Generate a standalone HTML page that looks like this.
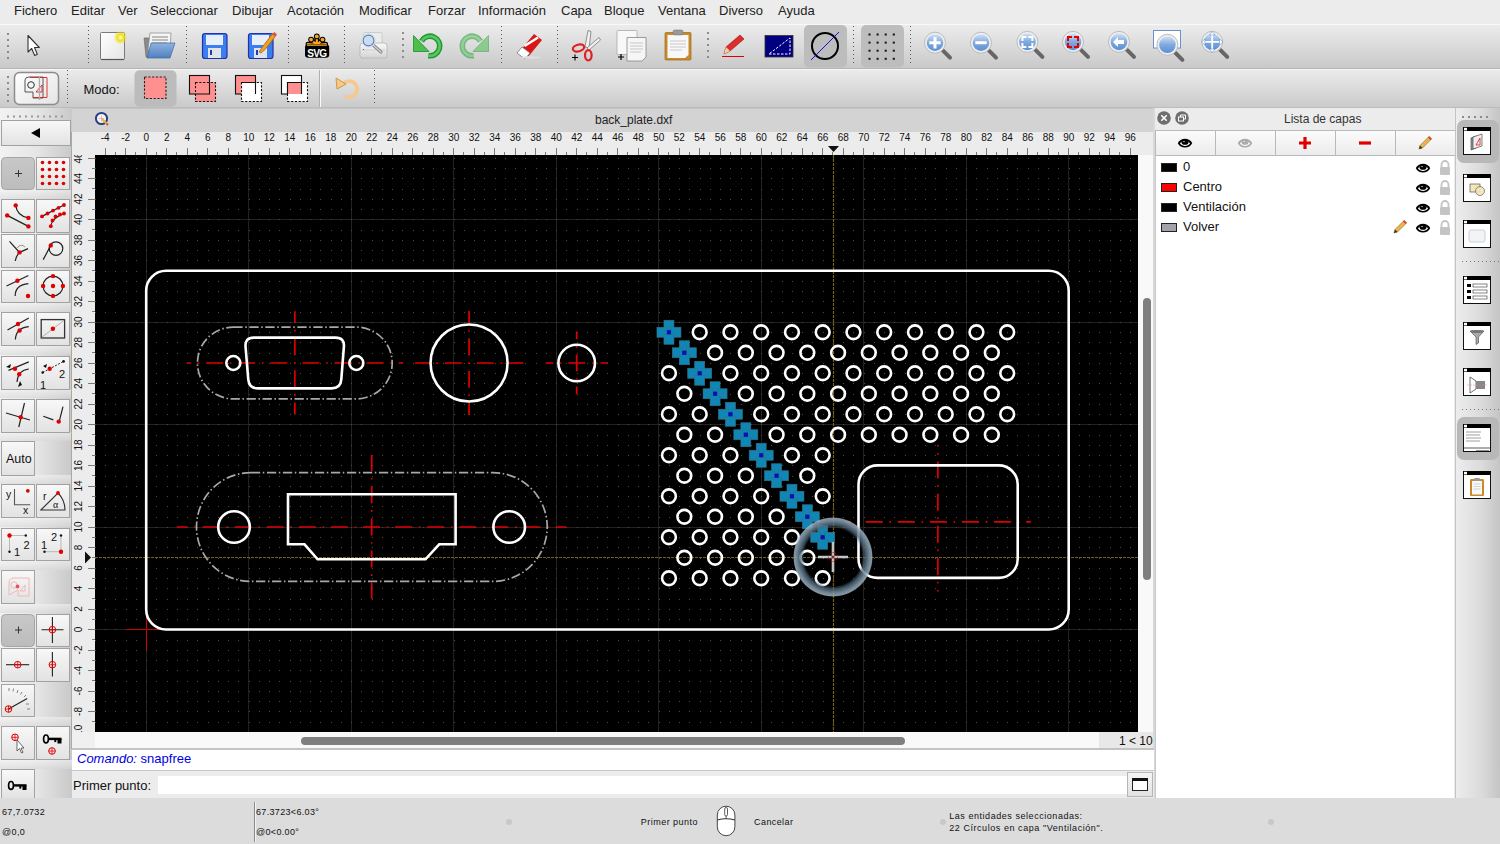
<!DOCTYPE html>
<html><head><meta charset="utf-8">
<style>
html,body{margin:0;padding:0;width:1500px;height:844px;overflow:hidden;background:#ececec;font-family:"Liberation Sans",sans-serif;color:#000}
.abs{position:absolute}
.t{position:absolute;white-space:nowrap;line-height:1}
#menubar{left:0;top:0;width:1500px;height:24px;background:#ececec}
#menubar span{position:absolute;top:3px;font-size:13px;color:#222}
#tb1{left:0;top:24px;width:1500px;height:44px;background:linear-gradient(#ececec,#c9c9c9);border-top:1px solid #f8f8f8;box-sizing:border-box}
#tb2{left:0;top:68px;width:1500px;height:40px;background:linear-gradient(#f6f6f6 0,#f6f6f6 1px,#ebebeb 1px,#cacaca 38px,#bcbcbc 38px);border-top:1px solid #b5b5b5;box-sizing:border-box}
#lefttb{left:0;top:108px;width:72px;height:690px;background:linear-gradient(90deg,#f2f2f2,#e6e6e6 50%,#c9c9c9)}
.btn{position:absolute;box-sizing:border-box;border:1px solid #9c9c9c;background:linear-gradient(#f7f7f7,#e4e4e4)}
.grip{position:absolute;width:2px;background:repeating-linear-gradient(#8a8a8a 0 2px,transparent 2px 6px)}
.griph{position:absolute;height:2px;background:repeating-linear-gradient(90deg,#8a8a8a 0 2px,transparent 2px 6px)}
#status{left:0;top:798px;width:1500px;height:46px;background:#dcdcdc}
#status .t{font-size:10px;color:#111}
</style></head><body>
<div id="menubar" class="abs"><span style="left:14px">Fichero</span><span style="left:71px">Editar</span><span style="left:118px">Ver</span><span style="left:150px">Seleccionar</span><span style="left:232px">Dibujar</span><span style="left:287px">Acotación</span><span style="left:359px">Modificar</span><span style="left:428px">Forzar</span><span style="left:478px">Información</span><span style="left:561px">Capa</span><span style="left:604px">Bloque</span><span style="left:658px">Ventana</span><span style="left:719px">Diverso</span><span style="left:778px">Ayuda</span>
</div>
<div id="tb1" class="abs"></div>

<div id="tb2" class="abs"></div>
<svg class="abs" style="left:0;top:0" width="1500" height="110" viewBox="0 0 1500 110">
<defs>
<linearGradient id="lens" x1="0" y1="0" x2="0" y2="1"><stop offset="0" stop-color="#cfe0f5"/><stop offset="0.5" stop-color="#7fa9e0"/><stop offset="1" stop-color="#5b8fd6"/></linearGradient>
<linearGradient id="fold" x1="0" y1="0" x2="0" y2="1"><stop offset="0" stop-color="#8fb4e0"/><stop offset="1" stop-color="#4f7fc0"/></linearGradient>
<linearGradient id="green" x1="0" y1="0" x2="1" y2="1"><stop offset="0" stop-color="#7fd07a"/><stop offset="1" stop-color="#1f9a3a"/></linearGradient>
<linearGradient id="page" x1="0" y1="0" x2="1" y2="1"><stop offset="0" stop-color="#ffffff"/><stop offset="1" stop-color="#e4e4e4"/></linearGradient>
<radialGradient id="glow"><stop offset="0" stop-color="#ffffc0"/><stop offset="0.45" stop-color="#f0e020"/><stop offset="1" stop-color="#f0e020" stop-opacity="0"/></radialGradient>
</defs>
<rect x="7" y="33" width="2" height="2" fill="#8c8c8c"/><rect x="7" y="39" width="2" height="2" fill="#8c8c8c"/><rect x="7" y="45" width="2" height="2" fill="#8c8c8c"/><rect x="7" y="51" width="2" height="2" fill="#8c8c8c"/><rect x="7" y="57" width="2" height="2" fill="#8c8c8c"/>
<path d="M88.5 26V66" stroke="#555" stroke-width="1" stroke-dasharray="1 3"/>
<path d="M186.5 26V66" stroke="#555" stroke-width="1" stroke-dasharray="1 3"/>
<path d="M288.5 26V66" stroke="#555" stroke-width="1" stroke-dasharray="1 3"/>
<path d="M344.5 26V66" stroke="#555" stroke-width="1" stroke-dasharray="1 3"/>
<rect x="402" y="32" width="2" height="2" fill="#8c8c8c"/><rect x="402" y="38" width="2" height="2" fill="#8c8c8c"/><rect x="402" y="44" width="2" height="2" fill="#8c8c8c"/><rect x="402" y="50" width="2" height="2" fill="#8c8c8c"/><rect x="402" y="56" width="2" height="2" fill="#8c8c8c"/>
<path d="M501.5 26V66" stroke="#555" stroke-width="1" stroke-dasharray="1 3"/>
<path d="M557.5 26V66" stroke="#555" stroke-width="1" stroke-dasharray="1 3"/>
<rect x="707" y="32" width="2" height="2" fill="#8c8c8c"/><rect x="707" y="38" width="2" height="2" fill="#8c8c8c"/><rect x="707" y="44" width="2" height="2" fill="#8c8c8c"/><rect x="707" y="50" width="2" height="2" fill="#8c8c8c"/><rect x="707" y="56" width="2" height="2" fill="#8c8c8c"/>
<path d="M853.5 26V66" stroke="#555" stroke-width="1" stroke-dasharray="1 3"/>
<path d="M910.5 26V66" stroke="#555" stroke-width="1" stroke-dasharray="1 3"/>
<path d="M28 35.5V52L31.7 48.5L34.7 55.5L37.3 54.3L34.5 47.5H39.3Z" fill="#fff" stroke="#333" stroke-width="1.1" stroke-linejoin="round"/>
<rect x="100.5" y="32.5" width="24" height="27" rx="1" fill="url(#page)" stroke="#7a7a7a" stroke-width="1"/><path d="M101 59.5H124" stroke="#555" stroke-width="1.2"/>
<circle cx="120.5" cy="37.5" r="7" fill="url(#glow)"/>
<path d="M144 38H151L153 36H160V57H146Z" fill="#8a8a8a" stroke="#666" stroke-width="0.6"/>
<path d="M150 33H171L170 50H148Z" fill="#f4f4f4" stroke="#888" stroke-width="0.7"/><path d="M152 37H168M152 40H168M152 43H167" stroke="#aaa" stroke-width="1.4"/>
<path d="M151 43H175L170 58H147Z" fill="url(#fold)" stroke="#41689c" stroke-width="0.7"/>
<rect x="202.5" y="33.5" width="24.5" height="25" rx="2.5" fill="#3b7ef0" stroke="#2430a8" stroke-width="1.2"/><rect x="206" y="35" width="17" height="10" fill="#e8eefa"/><rect x="208" y="48" width="13" height="10" fill="#dfe3ea"/><rect x="210" y="50" width="2" height="5" fill="#1d3fb0"/>
<rect x="248.5" y="33.5" width="24.5" height="25" rx="2.5" fill="#3b7ef0" stroke="#2430a8" stroke-width="1.2"/><rect x="252" y="35" width="17" height="10" fill="#e8eefa"/><rect x="254" y="48" width="13" height="10" fill="#dfe3ea"/><rect x="256" y="50" width="2" height="5" fill="#1d3fb0"/>
<path d="M259 52L263 46L273 33L276 35.5L266 48.5L261 53Z" fill="#f0a020" stroke="#a05a10" stroke-width="0.7"/><path d="M272 34.5L274.5 32L277 34.5L275 36.5Z" fill="#e05050"/>
<path d="M316.8 45L311.1 39.6M316.8 45L316.8 36.4M316.8 45L322.5 39.6M316.8 45L307.8 44M316.8 45L325.8 44" stroke="#000" stroke-width="4.6" stroke-linecap="round"/>
<path d="M316.8 45L311.1 39.6M316.8 45L316.8 36.4M316.8 45L322.5 39.6M316.8 45L307.8 44M316.8 45L325.8 44" stroke="#f6a82a" stroke-width="2.2" stroke-linecap="round"/>
<circle cx="311.1" cy="39.6" r="2.9" fill="#000"/><circle cx="316.8" cy="36.4" r="2.9" fill="#000"/><circle cx="322.5" cy="39.6" r="2.9" fill="#000"/><circle cx="311.1" cy="39.6" r="1.9" fill="#f6a82a"/><circle cx="316.8" cy="36.4" r="1.9" fill="#f6a82a"/><circle cx="322.5" cy="39.6" r="1.9" fill="#f6a82a"/>
<rect x="305" y="44.3" width="24.2" height="13.5" rx="3.2" fill="#000"/><path d="M307 45.2H327" stroke="#f6a82a" stroke-width="1.2"/>
<text x="316.9" y="56.6" text-anchor="middle" font-family="Liberation Sans" font-weight="bold" font-size="11" fill="#fff" letter-spacing="-0.8" transform="translate(316.9 0) scale(0.92 1) translate(-316.9 0)">SVG</text>
<rect x="363.5" y="32.5" width="18.5" height="14" rx="1" fill="#ececec" stroke="#c4c4c4" stroke-width="0.8"/>
<defs><linearGradient id="prn" x1="0" y1="0" x2="0" y2="1"><stop offset="0" stop-color="#fafafa"/><stop offset="1" stop-color="#d4d4d4"/></linearGradient></defs>
<path d="M360 46Q360 43 363 43H384Q387 43 387 46V56Q387 58 385 58H362Q360 58 360 56Z" fill="url(#prn)" stroke="#b4b4b4" stroke-width="0.8"/><path d="M362 50H385" stroke="#c8c8c8" stroke-width="0.8"/><circle cx="363.5" cy="49.5" r="0.6" fill="#555"/>
<path d="M372.5 44.5L381 52" stroke="#8a8a8a" stroke-width="3.2" stroke-linecap="round"/><path d="M372.5 44.5L381 52" stroke="#d0d0d0" stroke-width="1.2" stroke-linecap="round"/>
<circle cx="368.5" cy="40.5" r="6.8" fill="#f2f2f2" stroke="#cfcfcf" stroke-width="0.6"/><circle cx="368.5" cy="40.5" r="5.4" fill="#cfdcee" stroke="#4a84d0" stroke-width="1.1"/>
<path d="M421.5 41.1A9.8 9.8 0 1 1 428.3 55.65" fill="none" stroke="#1f9a3a" stroke-width="5.6"/><path d="M421.5 41.1A9.8 9.8 0 1 1 428.3 55.65" fill="none" stroke="#5cc65a" stroke-width="2.5"/><path d="M413.5 35.5V51.5H429Z" fill="#4cbf4c" stroke="#1c8a30" stroke-width="0.8" stroke-linejoin="round"/>
<g transform="translate(902 0) scale(-1 1)" opacity="0.55"><path d="M421.5 41.1A9.8 9.8 0 1 1 428.3 55.65" fill="none" stroke="#1f9a3a" stroke-width="5.6"/><path d="M421.5 41.1A9.8 9.8 0 1 1 428.3 55.65" fill="none" stroke="#5cc65a" stroke-width="2.5"/><path d="M413.5 35.5V51.5H429Z" fill="#4cbf4c" stroke="#1c8a30" stroke-width="0.8" stroke-linejoin="round"/></g>
<path d="M520 51L534 34L542 40L528 57Z" fill="#d81818"/><path d="M524.5 46L538 37.5" stroke="#fff" stroke-width="2.5"/><path d="M517 53L522 47L530 53L525 59Z" fill="#fff" stroke="#777" stroke-width="0.8"/><ellipse cx="531" cy="57.5" rx="10" ry="1.5" fill="#ddd"/>
<path d="M585 47L588 30.5L591 31.5L589 48Z" fill="#f2f2f2" stroke="#777" stroke-width="0.8"/><path d="M587 48L599 37.5L600.5 40L589 50Z" fill="#f2f2f2" stroke="#777" stroke-width="0.8"/>
<ellipse cx="578.5" cy="48" rx="5.8" ry="3.3" transform="rotate(-15 578.5 48)" fill="none" stroke="#e02020" stroke-width="2.2"/><ellipse cx="588.3" cy="55.3" rx="3.3" ry="5.2" fill="none" stroke="#e02020" stroke-width="2.2"/>
<path d="M572 57.5H578M575 54.5V60.5" stroke="#000" stroke-width="1.1"/>
<rect x="617" y="30.5" width="20" height="24" rx="1" fill="#f8f8f8" stroke="#aaa" stroke-width="0.8"/><path d="M627 37.5H646V57L642 61H627Z" fill="#f6f6f6" stroke="#888" stroke-width="0.8"/><path d="M630 43H643M630 46H643M630 49H643M630 52H641" stroke="#bbb" stroke-width="0.8"/>
<path d="M618 57H624M621 54V60" stroke="#000" stroke-width="1.2"/>
<rect x="665" y="32.5" width="26" height="27.5" rx="1" fill="#c98a2a" stroke="#9a6a20" stroke-width="0.7"/><path d="M667.5 35H688.5V55L685 58H667.5Z" fill="#f8f8f8"/><rect x="673" y="30" width="10" height="5" rx="1.5" fill="#999" stroke="#777" stroke-width="0.5"/><path d="M670 41H686M670 44H686M670 47H686M670 50H682" stroke="#bbb" stroke-width="0.8"/>
<path d="M724 54L726 47L740 35L744 39L730 51Z" fill="#e02c2c" stroke="#8a1a1a" stroke-width="0.6"/><path d="M724 54L726 47L730 51Z" fill="#f0d0a0"/><path d="M722 56.5H744" stroke="#e00000" stroke-width="1"/>
<rect x="765" y="35.5" width="28" height="21.5" fill="#000080" stroke="#333" stroke-width="0.8"/><path d="M769 54H790V38Z" fill="none" stroke="#fff" stroke-width="1" stroke-dasharray="2.5 1.5"/>
<rect x="804" y="25" width="43" height="42.5" rx="5" fill="#bdbdbd"/>
<rect x="861" y="25" width="43" height="42.5" rx="5" fill="#bdbdbd"/>
<circle cx="825" cy="46" r="13" fill="none" stroke="#000" stroke-width="2"/><path d="M811 60L839 32" stroke="#1010e0" stroke-width="1"/>
<rect x="868.5" y="33.5" width="2" height="2" fill="#111"/><rect x="876.6" y="33.5" width="2" height="2" fill="#111"/><rect x="884.7" y="33.5" width="2" height="2" fill="#111"/><rect x="892.8" y="33.5" width="2" height="2" fill="#111"/><rect x="868.5" y="41.6" width="2" height="2" fill="#111"/><rect x="876.6" y="41.6" width="2" height="2" fill="#111"/><rect x="884.7" y="41.6" width="2" height="2" fill="#111"/><rect x="892.8" y="41.6" width="2" height="2" fill="#111"/><rect x="868.5" y="49.7" width="2" height="2" fill="#111"/><rect x="876.6" y="49.7" width="2" height="2" fill="#111"/><rect x="884.7" y="49.7" width="2" height="2" fill="#111"/><rect x="892.8" y="49.7" width="2" height="2" fill="#111"/><rect x="868.5" y="57.8" width="2" height="2" fill="#111"/><rect x="876.6" y="57.8" width="2" height="2" fill="#111"/><rect x="884.7" y="57.8" width="2" height="2" fill="#111"/><rect x="892.8" y="57.8" width="2" height="2" fill="#111"/>
<path d="M943 50.7L950 57.7" stroke="#666" stroke-width="4" stroke-linecap="round"/><circle cx="935" cy="42.7" r="10.5" fill="#eee" stroke="#bbb" stroke-width="1"/><circle cx="935" cy="42.7" r="8.3" fill="url(#lens)"/><path d="M935 37V48.5M929.3 42.7H940.7" stroke="#fff" stroke-width="3"/>
<path d="M989 50.7L996 57.7" stroke="#666" stroke-width="4" stroke-linecap="round"/><circle cx="981" cy="42.7" r="10.5" fill="#eee" stroke="#bbb" stroke-width="1"/><circle cx="981" cy="42.7" r="8.3" fill="url(#lens)"/><path d="M975.3 42.7H986.7" stroke="#fff" stroke-width="3"/>
<path d="M1035.4 49.9L1042.4 56.9" stroke="#666" stroke-width="4" stroke-linecap="round"/><circle cx="1027.4" cy="41.9" r="10.5" fill="#eee" stroke="#bbb" stroke-width="1"/><circle cx="1027.4" cy="41.9" r="8.3" fill="url(#lens)"/><path d="M1022.4000000000001 40.9v-4h4M1028.4 36.9h4v4M1032.4 42.9v4h-4M1026.4 46.9h-4v-4" fill="none" stroke="#fff" stroke-width="2"/>
<path d="M1081 49.9L1088 56.9" stroke="#666" stroke-width="4" stroke-linecap="round"/><circle cx="1073" cy="41.9" r="10.5" fill="#eee" stroke="#bbb" stroke-width="1"/><circle cx="1073" cy="41.9" r="8.3" fill="url(#lens)"/><path d="M1068 40.9v-4h4M1074 36.9h4v4M1078 42.9v4h-4M1072 46.9h-4v-4" fill="none" stroke="#e00000" stroke-width="2"/>
<path d="M1127 49.9L1134 56.9" stroke="#666" stroke-width="4" stroke-linecap="round"/><circle cx="1119" cy="41.9" r="10.5" fill="#eee" stroke="#bbb" stroke-width="1"/><circle cx="1119" cy="41.9" r="8.3" fill="url(#lens)"/><path d="M1113 41.9L1118 37V40H1124V44H1118V47Z" fill="#fff"/>
<rect x="1153.5" y="30.5" width="27" height="17.5" fill="#fff" stroke="#6a8fd0" stroke-width="1"/>
<path d="M1175.4 52.8L1182.4 59.8" stroke="#666" stroke-width="4" stroke-linecap="round"/><circle cx="1167.4" cy="44.8" r="10.5" fill="#eee" stroke="#bbb" stroke-width="1"/><circle cx="1167.4" cy="44.8" r="8.3" fill="url(#lens)"/>
<path d="M1220.2 49.9L1227.2 56.9" stroke="#666" stroke-width="4" stroke-linecap="round"/><circle cx="1212.2" cy="41.9" r="10.5" fill="#eee" stroke="#bbb" stroke-width="1"/><circle cx="1212.2" cy="41.9" r="8.3" fill="url(#lens)"/><path d="M1212.2 33V51M1203 41.9H1221" stroke="#fff" stroke-width="1.8"/><path d="M1212.2 31.5L1209.5 35H1215ZM1212.2 52.5L1209.5 49H1215ZM1201.5 41.9L1205 39V45ZM1223 41.9L1219.5 39V45Z" fill="#fff" stroke="#5080c0" stroke-width="0.5"/>
<rect x="7" y="76" width="2" height="2" fill="#8c8c8c"/><rect x="7" y="82" width="2" height="2" fill="#8c8c8c"/><rect x="7" y="88" width="2" height="2" fill="#8c8c8c"/><rect x="7" y="94" width="2" height="2" fill="#8c8c8c"/><rect x="7" y="100" width="2" height="2" fill="#8c8c8c"/>
<rect x="14.5" y="72.5" width="44" height="32" rx="5" fill="url(#page)" stroke="#8c8c8c" stroke-width="1.5"/>
<path d="M25 92V80Q25 77 29 77H43V98H33V92Z" fill="none" stroke="#555" stroke-width="1"/><circle cx="31" cy="85" r="3.3" fill="none" stroke="#333" stroke-width="1"/><path d="M30 77.5H47V97.5H33M36 92L42 85V92Z" fill="none" stroke="#e02020" stroke-width="0.9"/><path d="M39.5 76V100" stroke="#aaa" stroke-width="1.3"/>
<path d="M67.5 70V106" stroke="#555" stroke-width="1" stroke-dasharray="1 3"/>
<text x="83.5" y="93.5" font-family="Liberation Sans" font-size="13" fill="#111">Modo:</text>
<rect x="134.5" y="70.3" width="42" height="36.4" rx="5" fill="#bcbcbc"/>
<rect x="144.5" y="77" width="21.5" height="21.5" fill="#ff9090" stroke="#222" stroke-width="1.1" stroke-dasharray="2.2 1.6"/>
<rect x="189.5" y="75.5" width="20" height="18.5" fill="#ff9090" stroke="#111" stroke-width="1.1"/>
<rect x="195.5" y="82.5" width="20" height="19" fill="#ff9090" stroke="#111" stroke-width="1.1" stroke-dasharray="2.2 1.6"/>
<path d="M195.5 94H209.5V82.5" fill="none" stroke="#111" stroke-width="1.1"/>
<rect x="235.5" y="75.5" width="20" height="18.5" fill="#ff9090" stroke="#111" stroke-width="1.1"/>
<rect x="241.5" y="82.5" width="20" height="19" fill="#fff" stroke="#111" stroke-width="1.1" stroke-dasharray="2.2 1.6"/>
<path d="M241.5 82.5H255.5V94" fill="none" stroke="#111" stroke-width="1.1"/>
<rect x="281.5" y="75.5" width="20" height="18.5" fill="#fff" stroke="#111" stroke-width="1.1"/>
<rect x="287.5" y="82.5" width="20" height="19" fill="#fff" stroke="#111" stroke-width="1.1" stroke-dasharray="2.2 1.6"/>
<rect x="287.5" y="82.5" width="14" height="11.5" fill="#ff9090"/><path d="M287.5 94V82.5H301.5V94" fill="none" stroke="#111" stroke-width="1.1"/>
<path d="M319.5 70V107" stroke="#b0b0b0" stroke-width="1"/><path d="M320.5 70V107" stroke="#fafafa" stroke-width="1"/>
<path d="M343 84A8 8 0 1 1 345 96" fill="none" stroke="#f6c88a" stroke-width="3.6"/><path d="M343 84A8 8 0 1 1 345 96" fill="none" stroke="#d89838" stroke-width="0.7" opacity="0"/><path d="M336 78L337 89L346 84Z" fill="#f6c88a" stroke="#c88a2a" stroke-width="0.8"/>
<path d="M374.5 70V106" stroke="#555" stroke-width="1" stroke-dasharray="1 3"/>
</svg>
<div id="lefttb" class="abs"></div>
<svg class="abs" style="left:0;top:108px" width="72" height="690" viewBox="0 108 72 690">
<defs><linearGradient id="bg" x1="0" y1="0" x2="0" y2="1"><stop offset="0" stop-color="#f8f8f8"/><stop offset="1" stop-color="#e2e2e2"/></linearGradient>
<linearGradient id="hl" x1="0" y1="0" x2="0" y2="1"><stop offset="0" stop-color="#c8c8c8"/><stop offset="1" stop-color="#bcbcbc"/></linearGradient>
<linearGradient id="sep" x1="0" y1="0" x2="0" y2="1"><stop offset="0" stop-color="#f4f4f4"/><stop offset="1" stop-color="#d8d8d8"/></linearGradient></defs>
<rect x="7" y="115.5" width="2" height="2" fill="#9a9a9a"/>
<rect x="13" y="115.5" width="2" height="2" fill="#9a9a9a"/>
<rect x="19" y="115.5" width="2" height="2" fill="#9a9a9a"/>
<rect x="25" y="115.5" width="2" height="2" fill="#9a9a9a"/>
<rect x="31" y="115.5" width="2" height="2" fill="#9a9a9a"/>
<rect x="37" y="115.5" width="2" height="2" fill="#9a9a9a"/>
<rect x="43" y="115.5" width="2" height="2" fill="#9a9a9a"/>
<rect x="49" y="115.5" width="2" height="2" fill="#9a9a9a"/>
<rect x="55" y="115.5" width="2" height="2" fill="#9a9a9a"/>
<rect x="61" y="115.5" width="2" height="2" fill="#9a9a9a"/>
<rect x="0" y="190" width="72" height="9" fill="url(#sep)" opacity="0.6"/>
<rect x="0" y="303" width="72" height="9" fill="url(#sep)" opacity="0.6"/>
<rect x="0" y="346" width="72" height="9" fill="url(#sep)" opacity="0.6"/>
<rect x="0" y="389" width="72" height="9" fill="url(#sep)" opacity="0.6"/>
<rect x="0" y="432" width="72" height="9" fill="url(#sep)" opacity="0.6"/>
<rect x="0" y="475" width="72" height="9" fill="url(#sep)" opacity="0.6"/>
<rect x="0" y="518" width="72" height="9" fill="url(#sep)" opacity="0.6"/>
<rect x="0" y="561" width="72" height="9" fill="url(#sep)" opacity="0.6"/>
<rect x="0" y="604" width="72" height="9" fill="url(#sep)" opacity="0.6"/>
<rect x="0" y="717" width="72" height="9" fill="url(#sep)" opacity="0.6"/>
<rect x="0" y="760" width="72" height="9" fill="url(#sep)" opacity="0.6"/>
<rect x="1.5" y="120.5" width="69" height="25" fill="url(#bg)" stroke="#a2a2a2" stroke-width="1"/>
<path d="M31 133L40 128V138Z" fill="#000"/>
<rect x="1.5" y="157.5" width="33" height="32" rx="4" fill="url(#hl)" stroke="#a6a6a6" stroke-width="1"/>
<rect x="36.5" y="157.5" width="33" height="32" fill="url(#bg)" stroke="#a2a2a2" stroke-width="1"/>
<rect x="1.5" y="199.5" width="33" height="33" fill="url(#bg)" stroke="#a2a2a2" stroke-width="1"/>
<rect x="36.5" y="199.5" width="33" height="33" fill="url(#bg)" stroke="#a2a2a2" stroke-width="1"/>
<rect x="1.5" y="234.5" width="33" height="33" fill="url(#bg)" stroke="#a2a2a2" stroke-width="1"/>
<rect x="36.5" y="234.5" width="33" height="33" fill="url(#bg)" stroke="#a2a2a2" stroke-width="1"/>
<rect x="1.5" y="270.5" width="33" height="32" fill="url(#bg)" stroke="#a2a2a2" stroke-width="1"/>
<rect x="36.5" y="270.5" width="33" height="32" fill="url(#bg)" stroke="#a2a2a2" stroke-width="1"/>
<rect x="1.5" y="312.5" width="33" height="33" fill="url(#bg)" stroke="#a2a2a2" stroke-width="1"/>
<rect x="36.5" y="312.5" width="33" height="33" fill="url(#bg)" stroke="#a2a2a2" stroke-width="1"/>
<rect x="1.5" y="356.5" width="33" height="33" fill="url(#bg)" stroke="#a2a2a2" stroke-width="1"/>
<rect x="36.5" y="356.5" width="33" height="33" fill="url(#bg)" stroke="#a2a2a2" stroke-width="1"/>
<rect x="1.5" y="399.5" width="33" height="33" fill="url(#bg)" stroke="#a2a2a2" stroke-width="1"/>
<rect x="36.5" y="399.5" width="33" height="33" fill="url(#bg)" stroke="#a2a2a2" stroke-width="1"/>
<rect x="1.5" y="441.5" width="33" height="34" fill="url(#bg)" stroke="#a2a2a2" stroke-width="1"/>
<rect x="1.5" y="484.5" width="33" height="33" fill="url(#bg)" stroke="#a2a2a2" stroke-width="1"/>
<rect x="36.5" y="484.5" width="33" height="33" fill="url(#bg)" stroke="#a2a2a2" stroke-width="1"/>
<rect x="1.5" y="528.5" width="33" height="32" fill="url(#bg)" stroke="#a2a2a2" stroke-width="1"/>
<rect x="36.5" y="528.5" width="33" height="32" fill="url(#bg)" stroke="#a2a2a2" stroke-width="1"/>
<rect x="1.5" y="570.5" width="33" height="33" fill="url(#bg)" stroke="#a2a2a2" stroke-width="1"/>
<rect x="1.5" y="614.5" width="33" height="32" rx="4" fill="url(#hl)" stroke="#a6a6a6" stroke-width="1"/>
<rect x="36.5" y="614.5" width="33" height="32" fill="url(#bg)" stroke="#a2a2a2" stroke-width="1"/>
<rect x="1.5" y="648.5" width="33" height="33" fill="url(#bg)" stroke="#a2a2a2" stroke-width="1"/>
<rect x="36.5" y="648.5" width="33" height="33" fill="url(#bg)" stroke="#a2a2a2" stroke-width="1"/>
<rect x="1.5" y="684.5" width="33" height="32" fill="url(#bg)" stroke="#a2a2a2" stroke-width="1"/>
<rect x="1.5" y="726.5" width="33" height="33" fill="url(#bg)" stroke="#a2a2a2" stroke-width="1"/>
<rect x="36.5" y="726.5" width="33" height="33" fill="url(#bg)" stroke="#a2a2a2" stroke-width="1"/>
<rect x="1.5" y="769.5" width="33" height="30" fill="url(#bg)" stroke="#a2a2a2" stroke-width="1"/>
<path d="M18.5 170V177M15 173.5H22" stroke="#333" stroke-width="1"/>
<circle cx="42.5" cy="162.5" r="1.8" fill="#e00000"/>
<circle cx="49.5" cy="162.5" r="1.8" fill="#e00000"/>
<circle cx="56.5" cy="162.5" r="1.8" fill="#e00000"/>
<circle cx="63.5" cy="162.5" r="1.8" fill="#e00000"/>
<circle cx="42.5" cy="169.5" r="1.8" fill="#e00000"/>
<circle cx="49.5" cy="169.5" r="1.8" fill="#e00000"/>
<circle cx="56.5" cy="169.5" r="1.8" fill="#e00000"/>
<circle cx="63.5" cy="169.5" r="1.8" fill="#e00000"/>
<circle cx="42.5" cy="176.5" r="1.8" fill="#e00000"/>
<circle cx="49.5" cy="176.5" r="1.8" fill="#e00000"/>
<circle cx="56.5" cy="176.5" r="1.8" fill="#e00000"/>
<circle cx="63.5" cy="176.5" r="1.8" fill="#e00000"/>
<circle cx="42.5" cy="183.5" r="1.8" fill="#e00000"/>
<circle cx="49.5" cy="183.5" r="1.8" fill="#e00000"/>
<circle cx="56.5" cy="183.5" r="1.8" fill="#e00000"/>
<circle cx="63.5" cy="183.5" r="1.8" fill="#e00000"/>
<path d="M7.2 215.4L28.4 226.4" fill="none" stroke="#222" stroke-width="1.2"/><path d="M15.7 205.4Q17 216 28.4 217.9" fill="none" stroke="#222" stroke-width="1.2"/><circle cx="7.2" cy="215.4" r="2.2" fill="#e00000"/><circle cx="28.4" cy="226.4" r="2.2" fill="#e00000"/><circle cx="15.7" cy="205.4" r="2.2" fill="#e00000"/><circle cx="28.4" cy="217.9" r="2.2" fill="#e00000"/>
<path d="M42 216.4L64 205" fill="none" stroke="#222" stroke-width="1.2"/><path d="M50.8 226.2Q52 218 64 213.5" fill="none" stroke="#222" stroke-width="1.2"/><circle cx="42" cy="216.4" r="1.9" fill="#e00000"/><circle cx="47.5" cy="213.5" r="1.9" fill="#e00000"/><circle cx="53" cy="210.6" r="1.9" fill="#e00000"/><circle cx="58.5" cy="207.8" r="1.9" fill="#e00000"/><circle cx="64" cy="205" r="1.9" fill="#e00000"/><circle cx="50.8" cy="226.2" r="1.9" fill="#e00000"/><circle cx="52.5" cy="220.5" r="1.9" fill="#e00000"/><circle cx="55.5" cy="216.5" r="1.9" fill="#e00000"/><circle cx="60" cy="214.5" r="1.9" fill="#e00000"/><circle cx="64" cy="213.5" r="1.9" fill="#e00000"/>
<path d="M9.5 241.4L19.5 252.4L28 248.6" fill="none" stroke="#222" stroke-width="1.2"/><path d="M19.5 252.4Q16 256 15.2 261" fill="none" stroke="#222" stroke-width="1.2"/><path d="M17 248Q21 243 25 247" fill="none" stroke="#555" stroke-width="0.6"/><circle cx="19.5" cy="252.4" r="2.2" fill="#e00000"/>
<circle cx="56" cy="248.6" r="6.8" fill="none" stroke="#222" stroke-width="1.2"/><path d="M43.2 259.6L50.8 245.4" fill="none" stroke="#222" stroke-width="1.2"/><circle cx="50.8" cy="245.4" r="2.2" fill="#e00000"/>
<path d="M6.6 286L28.4 275.5" fill="none" stroke="#222" stroke-width="1.2"/><path d="M15.2 296Q15 285 28.4 283.6" fill="none" stroke="#222" stroke-width="1.2"/><circle cx="17.4" cy="280.8" r="2.2" fill="#e00000"/><circle cx="28" cy="296" r="2.2" fill="#e00000"/>
<circle cx="53" cy="286" r="9.9" fill="none" stroke="#222" stroke-width="1.2"/><circle cx="53" cy="286" r="2.2" fill="#e00000"/><circle cx="53" cy="276.1" r="2.2" fill="#e00000"/><circle cx="53" cy="295.9" r="2.2" fill="#e00000"/><circle cx="43.1" cy="286" r="2.2" fill="#e00000"/><circle cx="62.9" cy="286" r="2.2" fill="#e00000"/>
<path d="M7.5 329.9L28.8 318" fill="none" stroke="#222" stroke-width="1.2"/><path d="M15.4 339.5Q16 328 28.8 326.7" fill="none" stroke="#222" stroke-width="1.2"/><circle cx="18" cy="324" r="2.2" fill="#e00000"/><circle cx="19.6" cy="330.5" r="2.2" fill="#e00000"/>
<rect x="41.2" y="319.6" width="23.4" height="18.4" fill="none" stroke="#333" stroke-width="1.3"/><path d="M41.5 337.5L64.5 320" fill="none" stroke="#888" stroke-width="0.6"/><circle cx="52.9" cy="328.8" r="2.2" fill="#e00000"/>
<path d="M8.5 370.4L28.8 361.9" fill="none" stroke="#222" stroke-width="1.2"/><path d="M17 382Q18 370 28.8 369" fill="none" stroke="#222" stroke-width="1.2"/><circle cx="15" cy="368.7" r="2.2" fill="#e00000"/><circle cx="19.2" cy="374.2" r="2.2" fill="#e00000"/><path d="M6 367L11 364L10 368Z" fill="#111"/><path d="M18 387L20 381L22 385Z" fill="#111"/>
<path d="M42.7 372.5L63.6 361.4" fill="none" stroke-dasharray="2 1.5" stroke="#222" stroke-width="1"/><circle cx="49.7" cy="368.7" r="2.2" fill="#e00000"/><circle cx="63.6" cy="361.4" r="1.3" fill="#111"/><circle cx="42.7" cy="372.5" r="1.3" fill="#111"/><path d="M43 366L47 364L46 368Z" fill="#111"/>
<text x="40" y="389" font-family="Liberation Sans" font-size="11" fill="#111">1</text><text x="59" y="378" font-family="Liberation Sans" font-size="11" fill="#111">2</text>
<path d="M6 413L29.9 420" fill="none" stroke="#222" stroke-width="1.2"/><path d="M24.5 403L18.8 427" fill="none" stroke="#222" stroke-width="1.2"/><circle cx="20.7" cy="417.3" r="2.2" fill="#e00000"/>
<path d="M43.3 416.3L53.3 419.9" fill="none" stroke="#222" stroke-width="1.2"/><path d="M63 406.7L59.3 421.2" fill="none" stroke="#222" stroke-width="1.2"/><circle cx="58.7" cy="421.6" r="2.2" fill="#e00000"/>
<text x="6" y="463" font-family="Liberation Sans" font-size="12.5" fill="#111">Auto</text>
<text x="6" y="498" font-family="Liberation Sans" font-size="10.5" fill="#111">y</text><text x="23" y="514" font-family="Liberation Sans" font-size="10.5" fill="#111">x</text><path d="M14.5 489V504.7H30.2" fill="none" stroke="#555" stroke-width="1.1"/><circle cx="27.8" cy="490.8" r="1.9" fill="#e00000"/>
<text x="43" y="500" font-family="Liberation Sans" font-size="10.5" fill="#111">r</text><path d="M40.9 510L58 493Q65 500 65 510Z" fill="none" stroke="#333" stroke-width="1.1"/><text x="53" y="508" font-family="Liberation Serif" font-size="10" fill="#111">α</text><circle cx="58" cy="493" r="1.9" fill="#e00000"/>
<path d="M9.5 535.5H25.8M9.5 535.5V551.7" fill="none" stroke="#aaa" stroke-width="0.8"/><circle cx="9.5" cy="535.5" r="2.2" fill="#e00000"/><circle cx="25.8" cy="535.5" r="1.2" fill="#111"/><circle cx="9.5" cy="551.7" r="1.2" fill="#111"/><text x="14" y="556" font-family="Liberation Sans" font-size="11" fill="#111">1</text><text x="23.5" y="549" font-family="Liberation Sans" font-size="11" fill="#111">2</text>
<path d="M44.5 551.7H61M61 535.5V551.7" fill="none" stroke="#aaa" stroke-width="0.8"/><circle cx="61" cy="551.7" r="2.2" fill="#e00000"/><circle cx="44.5" cy="551.7" r="1.2" fill="#111"/><circle cx="61" cy="535.5" r="1.2" fill="#111"/><text x="41" y="549" font-family="Liberation Sans" font-size="11" fill="#111">1</text><text x="51" y="541" font-family="Liberation Sans" font-size="11" fill="#111">2</text>
<path d="M9 595V583Q9 578 14 578H29V596H18V590Z" fill="none" stroke="#f2b0b0" stroke-width="0.9"/><circle cx="14" cy="585" r="3.2" fill="none" stroke="#f2b0b0" stroke-width="0.9"/><path d="M20 591L25 585V591Z" fill="none" stroke="#f2b0b0" stroke-width="0.9"/><circle cx="17.5" cy="586.5" r="1.9" fill="#f05050"/>
<path d="M18.5 626.5V633.5M15 630H22" stroke="#333" stroke-width="1"/>
<path d="M41.5 629.7H63.5M52.4 617V643" fill="none" stroke="#222" stroke-width="1.1"/><circle cx="52.4" cy="629.7" r="3.3" fill="none" stroke="#e00000" stroke-width="1"/><path d="M49.1 629.7h6.6M52.4 626.4000000000001v6.6" stroke="#e00000" stroke-width="0.8"/>
<path d="M6 664.7H29.2" fill="none" stroke="#222" stroke-width="1.1"/><circle cx="17.7" cy="664.7" r="3.3" fill="none" stroke="#e00000" stroke-width="1"/><path d="M14.399999999999999 664.7h6.6M17.7 661.4000000000001v6.6" stroke="#e00000" stroke-width="0.8"/><path d="M52.4 652V676.4" fill="none" stroke="#222" stroke-width="1.1"/><circle cx="52.4" cy="664.7" r="3.3" fill="none" stroke="#e00000" stroke-width="1"/><path d="M49.1 664.7h6.6M52.4 661.4000000000001v6.6" stroke="#e00000" stroke-width="0.8"/>
<path d="M8.5 709L27.2 698.5" fill="none" stroke="#222" stroke-width="1.1"/><circle cx="8.5" cy="709" r="3.3" fill="none" stroke="#e00000" stroke-width="1"/><path d="M5.2 709h6.6M8.5 705.7v6.6" stroke="#e00000" stroke-width="0.8"/><path d="M9 688V691M13.5 688.5L13 691.5M18 690L17 693M22 692L20.5 694.5M26 695L24 697M29 704H26M27 709H30" fill="none" stroke="#777" stroke-width="0.9"/>
<circle cx="15" cy="737.3" r="3.3" fill="none" stroke="#e00000" stroke-width="1"/><path d="M11.7 737.3h6.6M15 734.0v6.6" stroke="#e00000" stroke-width="0.8"/><path d="M17 740V751L19.5 748.5L21.5 753L23 752.3L21 748H24Z" fill="#fff" stroke="#444" stroke-width="0.8"/>
<ellipse cx="46" cy="738.9" rx="2.4" ry="3.9" fill="none" stroke="#000" stroke-width="1.7"/><path d="M48.2 738.9H61.5" stroke="#000" stroke-width="2.4"/><rect x="57.5" y="738.9" width="4" height="4.6" fill="#000"/><rect x="54.3" y="738.9" width="2" height="3.2" fill="#000"/><circle cx="52" cy="751" r="3.3" fill="none" stroke="#e00000" stroke-width="1"/><path d="M48.7 751h6.6M52 747.7v6.6" stroke="#e00000" stroke-width="0.8"/>
<ellipse cx="11" cy="785.4" rx="2.4" ry="3.9" fill="none" stroke="#000" stroke-width="1.7"/><path d="M13.2 785.4H26.5" stroke="#000" stroke-width="2.4"/><rect x="22.5" y="785.4" width="4" height="4.6" fill="#000"/><rect x="19.3" y="785.4" width="2" height="3.2" fill="#000"/>
</svg>
<div class="abs" style="left:72px;top:108px;width:1082px;height:641px;background:#ececec"></div>
<div class="abs" style="left:72px;top:108px;width:1082px;height:24px;background:#d3d3d3;border-top:1px solid #c4c4c4;box-sizing:border-box"></div>
<div class="t" style="left:595px;top:114px;font-size:12px;color:#222">back_plate.dxf</div>
<svg class="abs" style="left:94px;top:111px" width="16" height="16" viewBox="0 0 16 16"><circle cx="7.5" cy="7.5" r="5.6" fill="#f4f4f4" stroke="#2a3f86" stroke-width="2"/><path d="M4.5 7.5h6M7.5 4.5v6" stroke="#c99" stroke-width="0.6"/><path d="M8 8l5 5" stroke="#e8b830" stroke-width="2"/><path d="M12.5 12.5l1.5 1.5" stroke="#d05050" stroke-width="2"/></svg>
<svg class="abs" style="left:0;top:0" width="1500" height="844">
<path d="M105.5 148V155M115.5 152V155M125.5 148V155M135.5 152V155M146.5 148V155M156.5 152V155M166.5 148V155M176.5 152V155M187.5 148V155M197.5 152V155M207.5 148V155M217.5 152V155M228.5 148V155M238.5 152V155M248.5 148V155M258.5 152V155M269.5 148V155M279.5 152V155M289.5 148V155M299.5 152V155M310.5 148V155M320.5 152V155M330.5 148V155M340.5 152V155M351.5 148V155M361.5 152V155M371.5 148V155M381.5 152V155M392.5 148V155M402.5 152V155M412.5 148V155M422.5 152V155M433.5 148V155M443.5 152V155M453.5 148V155M463.5 152V155M474.5 148V155M484.5 152V155M494.5 148V155M504.5 152V155M515.5 148V155M525.5 152V155M535.5 148V155M545.5 152V155M556.5 148V155M566.5 152V155M576.5 148V155M586.5 152V155M597.5 148V155M607.5 152V155M617.5 148V155M627.5 152V155M638.5 148V155M648.5 152V155M658.5 148V155M668.5 152V155M679.5 148V155M689.5 152V155M699.5 148V155M709.5 152V155M720.5 148V155M730.5 152V155M740.5 148V155M750.5 152V155M761.5 148V155M771.5 152V155M781.5 148V155M791.5 152V155M802.5 148V155M812.5 152V155M822.5 148V155M832.5 152V155M843.5 148V155M853.5 152V155M863.5 148V155M873.5 152V155M884.5 148V155M894.5 152V155M904.5 148V155M914.5 152V155M925.5 148V155M935.5 152V155M945.5 148V155M955.5 152V155M966.5 148V155M976.5 152V155M986.5 148V155M996.5 152V155M1007.5 148V155M1017.5 152V155M1027.5 148V155M1037.5 152V155M1048.5 148V155M1058.5 152V155M1068.5 148V155M1078.5 152V155M1089.5 148V155M1099.5 152V155M1109.5 148V155M1119.5 152V155M1130.5 148V155M92 721.5H95M88 711.5H95M92 701.5H95M88 691.5H95M92 680.5H95M88 670.5H95M92 660.5H95M88 650.5H95M92 639.5H95M88 629.5H95M92 619.5H95M88 609.5H95M92 598.5H95M88 588.5H95M92 578.5H95M88 568.5H95M92 557.5H95M88 547.5H95M92 537.5H95M88 527.5H95M92 516.5H95M88 506.5H95M92 496.5H95M88 486.5H95M92 475.5H95M88 465.5H95M92 455.5H95M88 445.5H95M92 434.5H95M88 424.5H95M92 414.5H95M88 404.5H95M92 393.5H95M88 383.5H95M92 373.5H95M88 363.5H95M92 352.5H95M88 342.5H95M92 332.5H95M88 322.5H95M92 311.5H95M88 301.5H95M92 291.5H95M88 281.5H95M92 270.5H95M88 260.5H95M92 250.5H95M88 240.5H95M92 229.5H95M88 219.5H95M92 209.5H95M88 199.5H95M92 188.5H95M88 178.5H95M92 168.5H95M88 158.5H95" stroke="#7a7a7a" stroke-width="1" fill="none"/>
<g font-family="Liberation Sans" font-size="10" fill="#111"><text x="105.2" y="141" text-anchor="middle">-4</text><text x="125.7" y="141" text-anchor="middle">-2</text><text x="146.2" y="141" text-anchor="middle">0</text><text x="166.7" y="141" text-anchor="middle">2</text><text x="187.2" y="141" text-anchor="middle">4</text><text x="207.7" y="141" text-anchor="middle">6</text><text x="228.2" y="141" text-anchor="middle">8</text><text x="248.7" y="141" text-anchor="middle">10</text><text x="269.2" y="141" text-anchor="middle">12</text><text x="289.7" y="141" text-anchor="middle">14</text><text x="310.2" y="141" text-anchor="middle">16</text><text x="330.7" y="141" text-anchor="middle">18</text><text x="351.2" y="141" text-anchor="middle">20</text><text x="371.7" y="141" text-anchor="middle">22</text><text x="392.2" y="141" text-anchor="middle">24</text><text x="412.7" y="141" text-anchor="middle">26</text><text x="433.2" y="141" text-anchor="middle">28</text><text x="453.7" y="141" text-anchor="middle">30</text><text x="474.2" y="141" text-anchor="middle">32</text><text x="494.7" y="141" text-anchor="middle">34</text><text x="515.2" y="141" text-anchor="middle">36</text><text x="535.7" y="141" text-anchor="middle">38</text><text x="556.2" y="141" text-anchor="middle">40</text><text x="576.7" y="141" text-anchor="middle">42</text><text x="597.2" y="141" text-anchor="middle">44</text><text x="617.7" y="141" text-anchor="middle">46</text><text x="638.2" y="141" text-anchor="middle">48</text><text x="658.7" y="141" text-anchor="middle">50</text><text x="679.2" y="141" text-anchor="middle">52</text><text x="699.7" y="141" text-anchor="middle">54</text><text x="720.2" y="141" text-anchor="middle">56</text><text x="740.7" y="141" text-anchor="middle">58</text><text x="761.2" y="141" text-anchor="middle">60</text><text x="781.7" y="141" text-anchor="middle">62</text><text x="802.2" y="141" text-anchor="middle">64</text><text x="822.7" y="141" text-anchor="middle">66</text><text x="843.2" y="141" text-anchor="middle">68</text><text x="863.7" y="141" text-anchor="middle">70</text><text x="884.2" y="141" text-anchor="middle">72</text><text x="904.7" y="141" text-anchor="middle">74</text><text x="925.2" y="141" text-anchor="middle">76</text><text x="945.7" y="141" text-anchor="middle">78</text><text x="966.2" y="141" text-anchor="middle">80</text><text x="986.7" y="141" text-anchor="middle">82</text><text x="1007.2" y="141" text-anchor="middle">84</text><text x="1027.7" y="141" text-anchor="middle">86</text><text x="1048.2" y="141" text-anchor="middle">88</text><text x="1068.7" y="141" text-anchor="middle">90</text><text x="1089.2" y="141" text-anchor="middle">92</text><text x="1109.7" y="141" text-anchor="middle">94</text><text x="1130.2" y="141" text-anchor="middle">96</text></g>
<defs><clipPath id="lrc"><rect x="72" y="155" width="23" height="577"/></clipPath></defs><g clip-path="url(#lrc)" font-family="Liberation Sans" font-size="10" fill="#111"><text transform="translate(81.5 732) rotate(-90)" text-anchor="middle">-10</text><text transform="translate(81.5 711.5) rotate(-90)" text-anchor="middle">-8</text><text transform="translate(81.5 691) rotate(-90)" text-anchor="middle">-6</text><text transform="translate(81.5 670.5) rotate(-90)" text-anchor="middle">-4</text><text transform="translate(81.5 650) rotate(-90)" text-anchor="middle">-2</text><text transform="translate(81.5 629.5) rotate(-90)" text-anchor="middle">0</text><text transform="translate(81.5 609) rotate(-90)" text-anchor="middle">2</text><text transform="translate(81.5 588.5) rotate(-90)" text-anchor="middle">4</text><text transform="translate(81.5 568) rotate(-90)" text-anchor="middle">6</text><text transform="translate(81.5 547.5) rotate(-90)" text-anchor="middle">8</text><text transform="translate(81.5 527) rotate(-90)" text-anchor="middle">10</text><text transform="translate(81.5 506.5) rotate(-90)" text-anchor="middle">12</text><text transform="translate(81.5 486) rotate(-90)" text-anchor="middle">14</text><text transform="translate(81.5 465.5) rotate(-90)" text-anchor="middle">16</text><text transform="translate(81.5 445) rotate(-90)" text-anchor="middle">18</text><text transform="translate(81.5 424.5) rotate(-90)" text-anchor="middle">20</text><text transform="translate(81.5 404) rotate(-90)" text-anchor="middle">22</text><text transform="translate(81.5 383.5) rotate(-90)" text-anchor="middle">24</text><text transform="translate(81.5 363) rotate(-90)" text-anchor="middle">26</text><text transform="translate(81.5 342.5) rotate(-90)" text-anchor="middle">28</text><text transform="translate(81.5 322) rotate(-90)" text-anchor="middle">30</text><text transform="translate(81.5 301.5) rotate(-90)" text-anchor="middle">32</text><text transform="translate(81.5 281) rotate(-90)" text-anchor="middle">34</text><text transform="translate(81.5 260.5) rotate(-90)" text-anchor="middle">36</text><text transform="translate(81.5 240) rotate(-90)" text-anchor="middle">38</text><text transform="translate(81.5 219.5) rotate(-90)" text-anchor="middle">40</text><text transform="translate(81.5 199) rotate(-90)" text-anchor="middle">42</text><text transform="translate(81.5 178.5) rotate(-90)" text-anchor="middle">44</text><text transform="translate(81.5 158) rotate(-90)" text-anchor="middle">46</text></g>
<path d="M828 146H839L833.5 152Z" fill="#111"/>
<path d="M85 551.5V563.5L91 557.5Z" fill="#111"/>
</svg>
<div class="abs" style="left:71px;top:132px;width:1px;height:617px;background:#a9a9a9"></div>
<div class="abs" style="left:1138px;top:155px;width:16px;height:578px;background:#f9f9f9"></div>
<div class="abs" style="left:1143px;top:298px;width:8px;height:282px;border-radius:4px;background:#7f7f7f"></div>
<div class="abs" style="left:95px;top:732px;width:1004px;height:17px;background:#f9f9f9"></div>
<div class="abs" style="left:72px;top:732px;width:23px;height:17px;background:#f0f0f0"></div>
<div class="abs" style="left:301px;top:737px;width:604px;height:8px;border-radius:4px;background:#7f7f7f"></div>
<div class="abs" style="left:1099px;top:732px;width:55px;height:17px;background:#e8e8e8"></div>
<div class="t" style="left:1119px;top:735px;font-size:12px;color:#111">1 &lt; 10</div>
<div class="abs" style="left:1153px;top:108px;width:2px;height:690px;background:#d8d8d8"></div>
<svg class="abs" style="left:0;top:0" width="1500" height="844" viewBox="0 0 1500 844">
<defs><clipPath id="cc"><rect x="95" y="155" width="1043" height="577"/></clipPath></defs>
<rect x="95" y="155" width="1043" height="577" fill="#000"/>
<g clip-path="url(#cc)">
<path d="M43.5 155V732M146.5 155V732M248.5 155V732M351.5 155V732M453.5 155V732M556.5 155V732M658.5 155V732M761.5 155V732M863.5 155V732M966.5 155V732M1068.5 155V732M1171.5 155V732M95 834.5H1138M95 732.5H1138M95 629.5H1138M95 527.5H1138M95 424.5H1138M95 322.5H1138M95 219.5H1138M95 117.5H1138" stroke="#222" stroke-width="1" fill="none"/>
<path d="M95 732.5h1m9 0h1m9 0h1m10 0h1m9 0h1m9 0h1m9 0h1m10 0h1m9 0h1m9 0h1m9 0h1m10 0h1m9 0h1m9 0h1m9 0h1m10 0h1m9 0h1m9 0h1m9 0h1m10 0h1m9 0h1m9 0h1m9 0h1m10 0h1m9 0h1m9 0h1m9 0h1m10 0h1m9 0h1m9 0h1m9 0h1m10 0h1m9 0h1m9 0h1m9 0h1m10 0h1m9 0h1m9 0h1m9 0h1m10 0h1m9 0h1m9 0h1m9 0h1m10 0h1m9 0h1m9 0h1m9 0h1m10 0h1m9 0h1m9 0h1m9 0h1m10 0h1m9 0h1m9 0h1m9 0h1m10 0h1m9 0h1m9 0h1m9 0h1m10 0h1m9 0h1m9 0h1m9 0h1m10 0h1m9 0h1m9 0h1m9 0h1m10 0h1m9 0h1m9 0h1m9 0h1m10 0h1m9 0h1m9 0h1m9 0h1m10 0h1m9 0h1m9 0h1m9 0h1m10 0h1m9 0h1m9 0h1m9 0h1m10 0h1m9 0h1m9 0h1m9 0h1m10 0h1m9 0h1m9 0h1m9 0h1m10 0h1m9 0h1m9 0h1m9 0h1m10 0h1m9 0h1m9 0h1m9 0h1m10 0h1m9 0h1m9 0h1M95 722.5h1m9 0h1m9 0h1m10 0h1m9 0h1m9 0h1m9 0h1m10 0h1m9 0h1m9 0h1m9 0h1m10 0h1m9 0h1m9 0h1m9 0h1m10 0h1m9 0h1m9 0h1m9 0h1m10 0h1m9 0h1m9 0h1m9 0h1m10 0h1m9 0h1m9 0h1m9 0h1m10 0h1m9 0h1m9 0h1m9 0h1m10 0h1m9 0h1m9 0h1m9 0h1m10 0h1m9 0h1m9 0h1m9 0h1m10 0h1m9 0h1m9 0h1m9 0h1m10 0h1m9 0h1m9 0h1m9 0h1m10 0h1m9 0h1m9 0h1m9 0h1m10 0h1m9 0h1m9 0h1m9 0h1m10 0h1m9 0h1m9 0h1m9 0h1m10 0h1m9 0h1m9 0h1m9 0h1m10 0h1m9 0h1m9 0h1m9 0h1m10 0h1m9 0h1m9 0h1m9 0h1m10 0h1m9 0h1m9 0h1m9 0h1m10 0h1m9 0h1m9 0h1m9 0h1m10 0h1m9 0h1m9 0h1m9 0h1m10 0h1m9 0h1m9 0h1m9 0h1m10 0h1m9 0h1m9 0h1m9 0h1m10 0h1m9 0h1m9 0h1m9 0h1m10 0h1m9 0h1m9 0h1m9 0h1m10 0h1m9 0h1m9 0h1M95 711.5h1m9 0h1m9 0h1m10 0h1m9 0h1m9 0h1m9 0h1m10 0h1m9 0h1m9 0h1m9 0h1m10 0h1m9 0h1m9 0h1m9 0h1m10 0h1m9 0h1m9 0h1m9 0h1m10 0h1m9 0h1m9 0h1m9 0h1m10 0h1m9 0h1m9 0h1m9 0h1m10 0h1m9 0h1m9 0h1m9 0h1m10 0h1m9 0h1m9 0h1m9 0h1m10 0h1m9 0h1m9 0h1m9 0h1m10 0h1m9 0h1m9 0h1m9 0h1m10 0h1m9 0h1m9 0h1m9 0h1m10 0h1m9 0h1m9 0h1m9 0h1m10 0h1m9 0h1m9 0h1m9 0h1m10 0h1m9 0h1m9 0h1m9 0h1m10 0h1m9 0h1m9 0h1m9 0h1m10 0h1m9 0h1m9 0h1m9 0h1m10 0h1m9 0h1m9 0h1m9 0h1m10 0h1m9 0h1m9 0h1m9 0h1m10 0h1m9 0h1m9 0h1m9 0h1m10 0h1m9 0h1m9 0h1m9 0h1m10 0h1m9 0h1m9 0h1m9 0h1m10 0h1m9 0h1m9 0h1m9 0h1m10 0h1m9 0h1m9 0h1m9 0h1m10 0h1m9 0h1m9 0h1m9 0h1m10 0h1m9 0h1m9 0h1M95 701.5h1m9 0h1m9 0h1m10 0h1m9 0h1m9 0h1m9 0h1m10 0h1m9 0h1m9 0h1m9 0h1m10 0h1m9 0h1m9 0h1m9 0h1m10 0h1m9 0h1m9 0h1m9 0h1m10 0h1m9 0h1m9 0h1m9 0h1m10 0h1m9 0h1m9 0h1m9 0h1m10 0h1m9 0h1m9 0h1m9 0h1m10 0h1m9 0h1m9 0h1m9 0h1m10 0h1m9 0h1m9 0h1m9 0h1m10 0h1m9 0h1m9 0h1m9 0h1m10 0h1m9 0h1m9 0h1m9 0h1m10 0h1m9 0h1m9 0h1m9 0h1m10 0h1m9 0h1m9 0h1m9 0h1m10 0h1m9 0h1m9 0h1m9 0h1m10 0h1m9 0h1m9 0h1m9 0h1m10 0h1m9 0h1m9 0h1m9 0h1m10 0h1m9 0h1m9 0h1m9 0h1m10 0h1m9 0h1m9 0h1m9 0h1m10 0h1m9 0h1m9 0h1m9 0h1m10 0h1m9 0h1m9 0h1m9 0h1m10 0h1m9 0h1m9 0h1m9 0h1m10 0h1m9 0h1m9 0h1m9 0h1m10 0h1m9 0h1m9 0h1m9 0h1m10 0h1m9 0h1m9 0h1m9 0h1m10 0h1m9 0h1m9 0h1M95 691.5h1m9 0h1m9 0h1m10 0h1m9 0h1m9 0h1m9 0h1m10 0h1m9 0h1m9 0h1m9 0h1m10 0h1m9 0h1m9 0h1m9 0h1m10 0h1m9 0h1m9 0h1m9 0h1m10 0h1m9 0h1m9 0h1m9 0h1m10 0h1m9 0h1m9 0h1m9 0h1m10 0h1m9 0h1m9 0h1m9 0h1m10 0h1m9 0h1m9 0h1m9 0h1m10 0h1m9 0h1m9 0h1m9 0h1m10 0h1m9 0h1m9 0h1m9 0h1m10 0h1m9 0h1m9 0h1m9 0h1m10 0h1m9 0h1m9 0h1m9 0h1m10 0h1m9 0h1m9 0h1m9 0h1m10 0h1m9 0h1m9 0h1m9 0h1m10 0h1m9 0h1m9 0h1m9 0h1m10 0h1m9 0h1m9 0h1m9 0h1m10 0h1m9 0h1m9 0h1m9 0h1m10 0h1m9 0h1m9 0h1m9 0h1m10 0h1m9 0h1m9 0h1m9 0h1m10 0h1m9 0h1m9 0h1m9 0h1m10 0h1m9 0h1m9 0h1m9 0h1m10 0h1m9 0h1m9 0h1m9 0h1m10 0h1m9 0h1m9 0h1m9 0h1m10 0h1m9 0h1m9 0h1m9 0h1m10 0h1m9 0h1m9 0h1M95 681.5h1m9 0h1m9 0h1m10 0h1m9 0h1m9 0h1m9 0h1m10 0h1m9 0h1m9 0h1m9 0h1m10 0h1m9 0h1m9 0h1m9 0h1m10 0h1m9 0h1m9 0h1m9 0h1m10 0h1m9 0h1m9 0h1m9 0h1m10 0h1m9 0h1m9 0h1m9 0h1m10 0h1m9 0h1m9 0h1m9 0h1m10 0h1m9 0h1m9 0h1m9 0h1m10 0h1m9 0h1m9 0h1m9 0h1m10 0h1m9 0h1m9 0h1m9 0h1m10 0h1m9 0h1m9 0h1m9 0h1m10 0h1m9 0h1m9 0h1m9 0h1m10 0h1m9 0h1m9 0h1m9 0h1m10 0h1m9 0h1m9 0h1m9 0h1m10 0h1m9 0h1m9 0h1m9 0h1m10 0h1m9 0h1m9 0h1m9 0h1m10 0h1m9 0h1m9 0h1m9 0h1m10 0h1m9 0h1m9 0h1m9 0h1m10 0h1m9 0h1m9 0h1m9 0h1m10 0h1m9 0h1m9 0h1m9 0h1m10 0h1m9 0h1m9 0h1m9 0h1m10 0h1m9 0h1m9 0h1m9 0h1m10 0h1m9 0h1m9 0h1m9 0h1m10 0h1m9 0h1m9 0h1m9 0h1m10 0h1m9 0h1m9 0h1M95 670.5h1m9 0h1m9 0h1m10 0h1m9 0h1m9 0h1m9 0h1m10 0h1m9 0h1m9 0h1m9 0h1m10 0h1m9 0h1m9 0h1m9 0h1m10 0h1m9 0h1m9 0h1m9 0h1m10 0h1m9 0h1m9 0h1m9 0h1m10 0h1m9 0h1m9 0h1m9 0h1m10 0h1m9 0h1m9 0h1m9 0h1m10 0h1m9 0h1m9 0h1m9 0h1m10 0h1m9 0h1m9 0h1m9 0h1m10 0h1m9 0h1m9 0h1m9 0h1m10 0h1m9 0h1m9 0h1m9 0h1m10 0h1m9 0h1m9 0h1m9 0h1m10 0h1m9 0h1m9 0h1m9 0h1m10 0h1m9 0h1m9 0h1m9 0h1m10 0h1m9 0h1m9 0h1m9 0h1m10 0h1m9 0h1m9 0h1m9 0h1m10 0h1m9 0h1m9 0h1m9 0h1m10 0h1m9 0h1m9 0h1m9 0h1m10 0h1m9 0h1m9 0h1m9 0h1m10 0h1m9 0h1m9 0h1m9 0h1m10 0h1m9 0h1m9 0h1m9 0h1m10 0h1m9 0h1m9 0h1m9 0h1m10 0h1m9 0h1m9 0h1m9 0h1m10 0h1m9 0h1m9 0h1m9 0h1m10 0h1m9 0h1m9 0h1M95 660.5h1m9 0h1m9 0h1m10 0h1m9 0h1m9 0h1m9 0h1m10 0h1m9 0h1m9 0h1m9 0h1m10 0h1m9 0h1m9 0h1m9 0h1m10 0h1m9 0h1m9 0h1m9 0h1m10 0h1m9 0h1m9 0h1m9 0h1m10 0h1m9 0h1m9 0h1m9 0h1m10 0h1m9 0h1m9 0h1m9 0h1m10 0h1m9 0h1m9 0h1m9 0h1m10 0h1m9 0h1m9 0h1m9 0h1m10 0h1m9 0h1m9 0h1m9 0h1m10 0h1m9 0h1m9 0h1m9 0h1m10 0h1m9 0h1m9 0h1m9 0h1m10 0h1m9 0h1m9 0h1m9 0h1m10 0h1m9 0h1m9 0h1m9 0h1m10 0h1m9 0h1m9 0h1m9 0h1m10 0h1m9 0h1m9 0h1m9 0h1m10 0h1m9 0h1m9 0h1m9 0h1m10 0h1m9 0h1m9 0h1m9 0h1m10 0h1m9 0h1m9 0h1m9 0h1m10 0h1m9 0h1m9 0h1m9 0h1m10 0h1m9 0h1m9 0h1m9 0h1m10 0h1m9 0h1m9 0h1m9 0h1m10 0h1m9 0h1m9 0h1m9 0h1m10 0h1m9 0h1m9 0h1m9 0h1m10 0h1m9 0h1m9 0h1M95 650.5h1m9 0h1m9 0h1m10 0h1m9 0h1m9 0h1m9 0h1m10 0h1m9 0h1m9 0h1m9 0h1m10 0h1m9 0h1m9 0h1m9 0h1m10 0h1m9 0h1m9 0h1m9 0h1m10 0h1m9 0h1m9 0h1m9 0h1m10 0h1m9 0h1m9 0h1m9 0h1m10 0h1m9 0h1m9 0h1m9 0h1m10 0h1m9 0h1m9 0h1m9 0h1m10 0h1m9 0h1m9 0h1m9 0h1m10 0h1m9 0h1m9 0h1m9 0h1m10 0h1m9 0h1m9 0h1m9 0h1m10 0h1m9 0h1m9 0h1m9 0h1m10 0h1m9 0h1m9 0h1m9 0h1m10 0h1m9 0h1m9 0h1m9 0h1m10 0h1m9 0h1m9 0h1m9 0h1m10 0h1m9 0h1m9 0h1m9 0h1m10 0h1m9 0h1m9 0h1m9 0h1m10 0h1m9 0h1m9 0h1m9 0h1m10 0h1m9 0h1m9 0h1m9 0h1m10 0h1m9 0h1m9 0h1m9 0h1m10 0h1m9 0h1m9 0h1m9 0h1m10 0h1m9 0h1m9 0h1m9 0h1m10 0h1m9 0h1m9 0h1m9 0h1m10 0h1m9 0h1m9 0h1m9 0h1m10 0h1m9 0h1m9 0h1M95 640.5h1m9 0h1m9 0h1m10 0h1m9 0h1m9 0h1m9 0h1m10 0h1m9 0h1m9 0h1m9 0h1m10 0h1m9 0h1m9 0h1m9 0h1m10 0h1m9 0h1m9 0h1m9 0h1m10 0h1m9 0h1m9 0h1m9 0h1m10 0h1m9 0h1m9 0h1m9 0h1m10 0h1m9 0h1m9 0h1m9 0h1m10 0h1m9 0h1m9 0h1m9 0h1m10 0h1m9 0h1m9 0h1m9 0h1m10 0h1m9 0h1m9 0h1m9 0h1m10 0h1m9 0h1m9 0h1m9 0h1m10 0h1m9 0h1m9 0h1m9 0h1m10 0h1m9 0h1m9 0h1m9 0h1m10 0h1m9 0h1m9 0h1m9 0h1m10 0h1m9 0h1m9 0h1m9 0h1m10 0h1m9 0h1m9 0h1m9 0h1m10 0h1m9 0h1m9 0h1m9 0h1m10 0h1m9 0h1m9 0h1m9 0h1m10 0h1m9 0h1m9 0h1m9 0h1m10 0h1m9 0h1m9 0h1m9 0h1m10 0h1m9 0h1m9 0h1m9 0h1m10 0h1m9 0h1m9 0h1m9 0h1m10 0h1m9 0h1m9 0h1m9 0h1m10 0h1m9 0h1m9 0h1m9 0h1m10 0h1m9 0h1m9 0h1M95 629.5h1m9 0h1m9 0h1m10 0h1m9 0h1m9 0h1m9 0h1m10 0h1m9 0h1m9 0h1m9 0h1m10 0h1m9 0h1m9 0h1m9 0h1m10 0h1m9 0h1m9 0h1m9 0h1m10 0h1m9 0h1m9 0h1m9 0h1m10 0h1m9 0h1m9 0h1m9 0h1m10 0h1m9 0h1m9 0h1m9 0h1m10 0h1m9 0h1m9 0h1m9 0h1m10 0h1m9 0h1m9 0h1m9 0h1m10 0h1m9 0h1m9 0h1m9 0h1m10 0h1m9 0h1m9 0h1m9 0h1m10 0h1m9 0h1m9 0h1m9 0h1m10 0h1m9 0h1m9 0h1m9 0h1m10 0h1m9 0h1m9 0h1m9 0h1m10 0h1m9 0h1m9 0h1m9 0h1m10 0h1m9 0h1m9 0h1m9 0h1m10 0h1m9 0h1m9 0h1m9 0h1m10 0h1m9 0h1m9 0h1m9 0h1m10 0h1m9 0h1m9 0h1m9 0h1m10 0h1m9 0h1m9 0h1m9 0h1m10 0h1m9 0h1m9 0h1m9 0h1m10 0h1m9 0h1m9 0h1m9 0h1m10 0h1m9 0h1m9 0h1m9 0h1m10 0h1m9 0h1m9 0h1m9 0h1m10 0h1m9 0h1m9 0h1M95 619.5h1m9 0h1m9 0h1m10 0h1m9 0h1m9 0h1m9 0h1m10 0h1m9 0h1m9 0h1m9 0h1m10 0h1m9 0h1m9 0h1m9 0h1m10 0h1m9 0h1m9 0h1m9 0h1m10 0h1m9 0h1m9 0h1m9 0h1m10 0h1m9 0h1m9 0h1m9 0h1m10 0h1m9 0h1m9 0h1m9 0h1m10 0h1m9 0h1m9 0h1m9 0h1m10 0h1m9 0h1m9 0h1m9 0h1m10 0h1m9 0h1m9 0h1m9 0h1m10 0h1m9 0h1m9 0h1m9 0h1m10 0h1m9 0h1m9 0h1m9 0h1m10 0h1m9 0h1m9 0h1m9 0h1m10 0h1m9 0h1m9 0h1m9 0h1m10 0h1m9 0h1m9 0h1m9 0h1m10 0h1m9 0h1m9 0h1m9 0h1m10 0h1m9 0h1m9 0h1m9 0h1m10 0h1m9 0h1m9 0h1m9 0h1m10 0h1m9 0h1m9 0h1m9 0h1m10 0h1m9 0h1m9 0h1m9 0h1m10 0h1m9 0h1m9 0h1m9 0h1m10 0h1m9 0h1m9 0h1m9 0h1m10 0h1m9 0h1m9 0h1m9 0h1m10 0h1m9 0h1m9 0h1m9 0h1m10 0h1m9 0h1m9 0h1M95 609.5h1m9 0h1m9 0h1m10 0h1m9 0h1m9 0h1m9 0h1m10 0h1m9 0h1m9 0h1m9 0h1m10 0h1m9 0h1m9 0h1m9 0h1m10 0h1m9 0h1m9 0h1m9 0h1m10 0h1m9 0h1m9 0h1m9 0h1m10 0h1m9 0h1m9 0h1m9 0h1m10 0h1m9 0h1m9 0h1m9 0h1m10 0h1m9 0h1m9 0h1m9 0h1m10 0h1m9 0h1m9 0h1m9 0h1m10 0h1m9 0h1m9 0h1m9 0h1m10 0h1m9 0h1m9 0h1m9 0h1m10 0h1m9 0h1m9 0h1m9 0h1m10 0h1m9 0h1m9 0h1m9 0h1m10 0h1m9 0h1m9 0h1m9 0h1m10 0h1m9 0h1m9 0h1m9 0h1m10 0h1m9 0h1m9 0h1m9 0h1m10 0h1m9 0h1m9 0h1m9 0h1m10 0h1m9 0h1m9 0h1m9 0h1m10 0h1m9 0h1m9 0h1m9 0h1m10 0h1m9 0h1m9 0h1m9 0h1m10 0h1m9 0h1m9 0h1m9 0h1m10 0h1m9 0h1m9 0h1m9 0h1m10 0h1m9 0h1m9 0h1m9 0h1m10 0h1m9 0h1m9 0h1m9 0h1m10 0h1m9 0h1m9 0h1M95 599.5h1m9 0h1m9 0h1m10 0h1m9 0h1m9 0h1m9 0h1m10 0h1m9 0h1m9 0h1m9 0h1m10 0h1m9 0h1m9 0h1m9 0h1m10 0h1m9 0h1m9 0h1m9 0h1m10 0h1m9 0h1m9 0h1m9 0h1m10 0h1m9 0h1m9 0h1m9 0h1m10 0h1m9 0h1m9 0h1m9 0h1m10 0h1m9 0h1m9 0h1m9 0h1m10 0h1m9 0h1m9 0h1m9 0h1m10 0h1m9 0h1m9 0h1m9 0h1m10 0h1m9 0h1m9 0h1m9 0h1m10 0h1m9 0h1m9 0h1m9 0h1m10 0h1m9 0h1m9 0h1m9 0h1m10 0h1m9 0h1m9 0h1m9 0h1m10 0h1m9 0h1m9 0h1m9 0h1m10 0h1m9 0h1m9 0h1m9 0h1m10 0h1m9 0h1m9 0h1m9 0h1m10 0h1m9 0h1m9 0h1m9 0h1m10 0h1m9 0h1m9 0h1m9 0h1m10 0h1m9 0h1m9 0h1m9 0h1m10 0h1m9 0h1m9 0h1m9 0h1m10 0h1m9 0h1m9 0h1m9 0h1m10 0h1m9 0h1m9 0h1m9 0h1m10 0h1m9 0h1m9 0h1m9 0h1m10 0h1m9 0h1m9 0h1M95 588.5h1m9 0h1m9 0h1m10 0h1m9 0h1m9 0h1m9 0h1m10 0h1m9 0h1m9 0h1m9 0h1m10 0h1m9 0h1m9 0h1m9 0h1m10 0h1m9 0h1m9 0h1m9 0h1m10 0h1m9 0h1m9 0h1m9 0h1m10 0h1m9 0h1m9 0h1m9 0h1m10 0h1m9 0h1m9 0h1m9 0h1m10 0h1m9 0h1m9 0h1m9 0h1m10 0h1m9 0h1m9 0h1m9 0h1m10 0h1m9 0h1m9 0h1m9 0h1m10 0h1m9 0h1m9 0h1m9 0h1m10 0h1m9 0h1m9 0h1m9 0h1m10 0h1m9 0h1m9 0h1m9 0h1m10 0h1m9 0h1m9 0h1m9 0h1m10 0h1m9 0h1m9 0h1m9 0h1m10 0h1m9 0h1m9 0h1m9 0h1m10 0h1m9 0h1m9 0h1m9 0h1m10 0h1m9 0h1m9 0h1m9 0h1m10 0h1m9 0h1m9 0h1m9 0h1m10 0h1m9 0h1m9 0h1m9 0h1m10 0h1m9 0h1m9 0h1m9 0h1m10 0h1m9 0h1m9 0h1m9 0h1m10 0h1m9 0h1m9 0h1m9 0h1m10 0h1m9 0h1m9 0h1m9 0h1m10 0h1m9 0h1m9 0h1M95 578.5h1m9 0h1m9 0h1m10 0h1m9 0h1m9 0h1m9 0h1m10 0h1m9 0h1m9 0h1m9 0h1m10 0h1m9 0h1m9 0h1m9 0h1m10 0h1m9 0h1m9 0h1m9 0h1m10 0h1m9 0h1m9 0h1m9 0h1m10 0h1m9 0h1m9 0h1m9 0h1m10 0h1m9 0h1m9 0h1m9 0h1m10 0h1m9 0h1m9 0h1m9 0h1m10 0h1m9 0h1m9 0h1m9 0h1m10 0h1m9 0h1m9 0h1m9 0h1m10 0h1m9 0h1m9 0h1m9 0h1m10 0h1m9 0h1m9 0h1m9 0h1m10 0h1m9 0h1m9 0h1m9 0h1m10 0h1m9 0h1m9 0h1m9 0h1m10 0h1m9 0h1m9 0h1m9 0h1m10 0h1m9 0h1m9 0h1m9 0h1m10 0h1m9 0h1m9 0h1m9 0h1m10 0h1m9 0h1m9 0h1m9 0h1m10 0h1m9 0h1m9 0h1m9 0h1m10 0h1m9 0h1m9 0h1m9 0h1m10 0h1m9 0h1m9 0h1m9 0h1m10 0h1m9 0h1m9 0h1m9 0h1m10 0h1m9 0h1m9 0h1m9 0h1m10 0h1m9 0h1m9 0h1m9 0h1m10 0h1m9 0h1m9 0h1M95 568.5h1m9 0h1m9 0h1m10 0h1m9 0h1m9 0h1m9 0h1m10 0h1m9 0h1m9 0h1m9 0h1m10 0h1m9 0h1m9 0h1m9 0h1m10 0h1m9 0h1m9 0h1m9 0h1m10 0h1m9 0h1m9 0h1m9 0h1m10 0h1m9 0h1m9 0h1m9 0h1m10 0h1m9 0h1m9 0h1m9 0h1m10 0h1m9 0h1m9 0h1m9 0h1m10 0h1m9 0h1m9 0h1m9 0h1m10 0h1m9 0h1m9 0h1m9 0h1m10 0h1m9 0h1m9 0h1m9 0h1m10 0h1m9 0h1m9 0h1m9 0h1m10 0h1m9 0h1m9 0h1m9 0h1m10 0h1m9 0h1m9 0h1m9 0h1m10 0h1m9 0h1m9 0h1m9 0h1m10 0h1m9 0h1m9 0h1m9 0h1m10 0h1m9 0h1m9 0h1m9 0h1m10 0h1m9 0h1m9 0h1m9 0h1m10 0h1m9 0h1m9 0h1m9 0h1m10 0h1m9 0h1m9 0h1m9 0h1m10 0h1m9 0h1m9 0h1m9 0h1m10 0h1m9 0h1m9 0h1m9 0h1m10 0h1m9 0h1m9 0h1m9 0h1m10 0h1m9 0h1m9 0h1m9 0h1m10 0h1m9 0h1m9 0h1M95 558.5h1m9 0h1m9 0h1m10 0h1m9 0h1m9 0h1m9 0h1m10 0h1m9 0h1m9 0h1m9 0h1m10 0h1m9 0h1m9 0h1m9 0h1m10 0h1m9 0h1m9 0h1m9 0h1m10 0h1m9 0h1m9 0h1m9 0h1m10 0h1m9 0h1m9 0h1m9 0h1m10 0h1m9 0h1m9 0h1m9 0h1m10 0h1m9 0h1m9 0h1m9 0h1m10 0h1m9 0h1m9 0h1m9 0h1m10 0h1m9 0h1m9 0h1m9 0h1m10 0h1m9 0h1m9 0h1m9 0h1m10 0h1m9 0h1m9 0h1m9 0h1m10 0h1m9 0h1m9 0h1m9 0h1m10 0h1m9 0h1m9 0h1m9 0h1m10 0h1m9 0h1m9 0h1m9 0h1m10 0h1m9 0h1m9 0h1m9 0h1m10 0h1m9 0h1m9 0h1m9 0h1m10 0h1m9 0h1m9 0h1m9 0h1m10 0h1m9 0h1m9 0h1m9 0h1m10 0h1m9 0h1m9 0h1m9 0h1m10 0h1m9 0h1m9 0h1m9 0h1m10 0h1m9 0h1m9 0h1m9 0h1m10 0h1m9 0h1m9 0h1m9 0h1m10 0h1m9 0h1m9 0h1m9 0h1m10 0h1m9 0h1m9 0h1M95 547.5h1m9 0h1m9 0h1m10 0h1m9 0h1m9 0h1m9 0h1m10 0h1m9 0h1m9 0h1m9 0h1m10 0h1m9 0h1m9 0h1m9 0h1m10 0h1m9 0h1m9 0h1m9 0h1m10 0h1m9 0h1m9 0h1m9 0h1m10 0h1m9 0h1m9 0h1m9 0h1m10 0h1m9 0h1m9 0h1m9 0h1m10 0h1m9 0h1m9 0h1m9 0h1m10 0h1m9 0h1m9 0h1m9 0h1m10 0h1m9 0h1m9 0h1m9 0h1m10 0h1m9 0h1m9 0h1m9 0h1m10 0h1m9 0h1m9 0h1m9 0h1m10 0h1m9 0h1m9 0h1m9 0h1m10 0h1m9 0h1m9 0h1m9 0h1m10 0h1m9 0h1m9 0h1m9 0h1m10 0h1m9 0h1m9 0h1m9 0h1m10 0h1m9 0h1m9 0h1m9 0h1m10 0h1m9 0h1m9 0h1m9 0h1m10 0h1m9 0h1m9 0h1m9 0h1m10 0h1m9 0h1m9 0h1m9 0h1m10 0h1m9 0h1m9 0h1m9 0h1m10 0h1m9 0h1m9 0h1m9 0h1m10 0h1m9 0h1m9 0h1m9 0h1m10 0h1m9 0h1m9 0h1m9 0h1m10 0h1m9 0h1m9 0h1M95 537.5h1m9 0h1m9 0h1m10 0h1m9 0h1m9 0h1m9 0h1m10 0h1m9 0h1m9 0h1m9 0h1m10 0h1m9 0h1m9 0h1m9 0h1m10 0h1m9 0h1m9 0h1m9 0h1m10 0h1m9 0h1m9 0h1m9 0h1m10 0h1m9 0h1m9 0h1m9 0h1m10 0h1m9 0h1m9 0h1m9 0h1m10 0h1m9 0h1m9 0h1m9 0h1m10 0h1m9 0h1m9 0h1m9 0h1m10 0h1m9 0h1m9 0h1m9 0h1m10 0h1m9 0h1m9 0h1m9 0h1m10 0h1m9 0h1m9 0h1m9 0h1m10 0h1m9 0h1m9 0h1m9 0h1m10 0h1m9 0h1m9 0h1m9 0h1m10 0h1m9 0h1m9 0h1m9 0h1m10 0h1m9 0h1m9 0h1m9 0h1m10 0h1m9 0h1m9 0h1m9 0h1m10 0h1m9 0h1m9 0h1m9 0h1m10 0h1m9 0h1m9 0h1m9 0h1m10 0h1m9 0h1m9 0h1m9 0h1m10 0h1m9 0h1m9 0h1m9 0h1m10 0h1m9 0h1m9 0h1m9 0h1m10 0h1m9 0h1m9 0h1m9 0h1m10 0h1m9 0h1m9 0h1m9 0h1m10 0h1m9 0h1m9 0h1M95 527.5h1m9 0h1m9 0h1m10 0h1m9 0h1m9 0h1m9 0h1m10 0h1m9 0h1m9 0h1m9 0h1m10 0h1m9 0h1m9 0h1m9 0h1m10 0h1m9 0h1m9 0h1m9 0h1m10 0h1m9 0h1m9 0h1m9 0h1m10 0h1m9 0h1m9 0h1m9 0h1m10 0h1m9 0h1m9 0h1m9 0h1m10 0h1m9 0h1m9 0h1m9 0h1m10 0h1m9 0h1m9 0h1m9 0h1m10 0h1m9 0h1m9 0h1m9 0h1m10 0h1m9 0h1m9 0h1m9 0h1m10 0h1m9 0h1m9 0h1m9 0h1m10 0h1m9 0h1m9 0h1m9 0h1m10 0h1m9 0h1m9 0h1m9 0h1m10 0h1m9 0h1m9 0h1m9 0h1m10 0h1m9 0h1m9 0h1m9 0h1m10 0h1m9 0h1m9 0h1m9 0h1m10 0h1m9 0h1m9 0h1m9 0h1m10 0h1m9 0h1m9 0h1m9 0h1m10 0h1m9 0h1m9 0h1m9 0h1m10 0h1m9 0h1m9 0h1m9 0h1m10 0h1m9 0h1m9 0h1m9 0h1m10 0h1m9 0h1m9 0h1m9 0h1m10 0h1m9 0h1m9 0h1m9 0h1m10 0h1m9 0h1m9 0h1M95 517.5h1m9 0h1m9 0h1m10 0h1m9 0h1m9 0h1m9 0h1m10 0h1m9 0h1m9 0h1m9 0h1m10 0h1m9 0h1m9 0h1m9 0h1m10 0h1m9 0h1m9 0h1m9 0h1m10 0h1m9 0h1m9 0h1m9 0h1m10 0h1m9 0h1m9 0h1m9 0h1m10 0h1m9 0h1m9 0h1m9 0h1m10 0h1m9 0h1m9 0h1m9 0h1m10 0h1m9 0h1m9 0h1m9 0h1m10 0h1m9 0h1m9 0h1m9 0h1m10 0h1m9 0h1m9 0h1m9 0h1m10 0h1m9 0h1m9 0h1m9 0h1m10 0h1m9 0h1m9 0h1m9 0h1m10 0h1m9 0h1m9 0h1m9 0h1m10 0h1m9 0h1m9 0h1m9 0h1m10 0h1m9 0h1m9 0h1m9 0h1m10 0h1m9 0h1m9 0h1m9 0h1m10 0h1m9 0h1m9 0h1m9 0h1m10 0h1m9 0h1m9 0h1m9 0h1m10 0h1m9 0h1m9 0h1m9 0h1m10 0h1m9 0h1m9 0h1m9 0h1m10 0h1m9 0h1m9 0h1m9 0h1m10 0h1m9 0h1m9 0h1m9 0h1m10 0h1m9 0h1m9 0h1m9 0h1m10 0h1m9 0h1m9 0h1M95 506.5h1m9 0h1m9 0h1m10 0h1m9 0h1m9 0h1m9 0h1m10 0h1m9 0h1m9 0h1m9 0h1m10 0h1m9 0h1m9 0h1m9 0h1m10 0h1m9 0h1m9 0h1m9 0h1m10 0h1m9 0h1m9 0h1m9 0h1m10 0h1m9 0h1m9 0h1m9 0h1m10 0h1m9 0h1m9 0h1m9 0h1m10 0h1m9 0h1m9 0h1m9 0h1m10 0h1m9 0h1m9 0h1m9 0h1m10 0h1m9 0h1m9 0h1m9 0h1m10 0h1m9 0h1m9 0h1m9 0h1m10 0h1m9 0h1m9 0h1m9 0h1m10 0h1m9 0h1m9 0h1m9 0h1m10 0h1m9 0h1m9 0h1m9 0h1m10 0h1m9 0h1m9 0h1m9 0h1m10 0h1m9 0h1m9 0h1m9 0h1m10 0h1m9 0h1m9 0h1m9 0h1m10 0h1m9 0h1m9 0h1m9 0h1m10 0h1m9 0h1m9 0h1m9 0h1m10 0h1m9 0h1m9 0h1m9 0h1m10 0h1m9 0h1m9 0h1m9 0h1m10 0h1m9 0h1m9 0h1m9 0h1m10 0h1m9 0h1m9 0h1m9 0h1m10 0h1m9 0h1m9 0h1m9 0h1m10 0h1m9 0h1m9 0h1M95 496.5h1m9 0h1m9 0h1m10 0h1m9 0h1m9 0h1m9 0h1m10 0h1m9 0h1m9 0h1m9 0h1m10 0h1m9 0h1m9 0h1m9 0h1m10 0h1m9 0h1m9 0h1m9 0h1m10 0h1m9 0h1m9 0h1m9 0h1m10 0h1m9 0h1m9 0h1m9 0h1m10 0h1m9 0h1m9 0h1m9 0h1m10 0h1m9 0h1m9 0h1m9 0h1m10 0h1m9 0h1m9 0h1m9 0h1m10 0h1m9 0h1m9 0h1m9 0h1m10 0h1m9 0h1m9 0h1m9 0h1m10 0h1m9 0h1m9 0h1m9 0h1m10 0h1m9 0h1m9 0h1m9 0h1m10 0h1m9 0h1m9 0h1m9 0h1m10 0h1m9 0h1m9 0h1m9 0h1m10 0h1m9 0h1m9 0h1m9 0h1m10 0h1m9 0h1m9 0h1m9 0h1m10 0h1m9 0h1m9 0h1m9 0h1m10 0h1m9 0h1m9 0h1m9 0h1m10 0h1m9 0h1m9 0h1m9 0h1m10 0h1m9 0h1m9 0h1m9 0h1m10 0h1m9 0h1m9 0h1m9 0h1m10 0h1m9 0h1m9 0h1m9 0h1m10 0h1m9 0h1m9 0h1m9 0h1m10 0h1m9 0h1m9 0h1M95 486.5h1m9 0h1m9 0h1m10 0h1m9 0h1m9 0h1m9 0h1m10 0h1m9 0h1m9 0h1m9 0h1m10 0h1m9 0h1m9 0h1m9 0h1m10 0h1m9 0h1m9 0h1m9 0h1m10 0h1m9 0h1m9 0h1m9 0h1m10 0h1m9 0h1m9 0h1m9 0h1m10 0h1m9 0h1m9 0h1m9 0h1m10 0h1m9 0h1m9 0h1m9 0h1m10 0h1m9 0h1m9 0h1m9 0h1m10 0h1m9 0h1m9 0h1m9 0h1m10 0h1m9 0h1m9 0h1m9 0h1m10 0h1m9 0h1m9 0h1m9 0h1m10 0h1m9 0h1m9 0h1m9 0h1m10 0h1m9 0h1m9 0h1m9 0h1m10 0h1m9 0h1m9 0h1m9 0h1m10 0h1m9 0h1m9 0h1m9 0h1m10 0h1m9 0h1m9 0h1m9 0h1m10 0h1m9 0h1m9 0h1m9 0h1m10 0h1m9 0h1m9 0h1m9 0h1m10 0h1m9 0h1m9 0h1m9 0h1m10 0h1m9 0h1m9 0h1m9 0h1m10 0h1m9 0h1m9 0h1m9 0h1m10 0h1m9 0h1m9 0h1m9 0h1m10 0h1m9 0h1m9 0h1m9 0h1m10 0h1m9 0h1m9 0h1M95 476.5h1m9 0h1m9 0h1m10 0h1m9 0h1m9 0h1m9 0h1m10 0h1m9 0h1m9 0h1m9 0h1m10 0h1m9 0h1m9 0h1m9 0h1m10 0h1m9 0h1m9 0h1m9 0h1m10 0h1m9 0h1m9 0h1m9 0h1m10 0h1m9 0h1m9 0h1m9 0h1m10 0h1m9 0h1m9 0h1m9 0h1m10 0h1m9 0h1m9 0h1m9 0h1m10 0h1m9 0h1m9 0h1m9 0h1m10 0h1m9 0h1m9 0h1m9 0h1m10 0h1m9 0h1m9 0h1m9 0h1m10 0h1m9 0h1m9 0h1m9 0h1m10 0h1m9 0h1m9 0h1m9 0h1m10 0h1m9 0h1m9 0h1m9 0h1m10 0h1m9 0h1m9 0h1m9 0h1m10 0h1m9 0h1m9 0h1m9 0h1m10 0h1m9 0h1m9 0h1m9 0h1m10 0h1m9 0h1m9 0h1m9 0h1m10 0h1m9 0h1m9 0h1m9 0h1m10 0h1m9 0h1m9 0h1m9 0h1m10 0h1m9 0h1m9 0h1m9 0h1m10 0h1m9 0h1m9 0h1m9 0h1m10 0h1m9 0h1m9 0h1m9 0h1m10 0h1m9 0h1m9 0h1m9 0h1m10 0h1m9 0h1m9 0h1M95 465.5h1m9 0h1m9 0h1m10 0h1m9 0h1m9 0h1m9 0h1m10 0h1m9 0h1m9 0h1m9 0h1m10 0h1m9 0h1m9 0h1m9 0h1m10 0h1m9 0h1m9 0h1m9 0h1m10 0h1m9 0h1m9 0h1m9 0h1m10 0h1m9 0h1m9 0h1m9 0h1m10 0h1m9 0h1m9 0h1m9 0h1m10 0h1m9 0h1m9 0h1m9 0h1m10 0h1m9 0h1m9 0h1m9 0h1m10 0h1m9 0h1m9 0h1m9 0h1m10 0h1m9 0h1m9 0h1m9 0h1m10 0h1m9 0h1m9 0h1m9 0h1m10 0h1m9 0h1m9 0h1m9 0h1m10 0h1m9 0h1m9 0h1m9 0h1m10 0h1m9 0h1m9 0h1m9 0h1m10 0h1m9 0h1m9 0h1m9 0h1m10 0h1m9 0h1m9 0h1m9 0h1m10 0h1m9 0h1m9 0h1m9 0h1m10 0h1m9 0h1m9 0h1m9 0h1m10 0h1m9 0h1m9 0h1m9 0h1m10 0h1m9 0h1m9 0h1m9 0h1m10 0h1m9 0h1m9 0h1m9 0h1m10 0h1m9 0h1m9 0h1m9 0h1m10 0h1m9 0h1m9 0h1m9 0h1m10 0h1m9 0h1m9 0h1M95 455.5h1m9 0h1m9 0h1m10 0h1m9 0h1m9 0h1m9 0h1m10 0h1m9 0h1m9 0h1m9 0h1m10 0h1m9 0h1m9 0h1m9 0h1m10 0h1m9 0h1m9 0h1m9 0h1m10 0h1m9 0h1m9 0h1m9 0h1m10 0h1m9 0h1m9 0h1m9 0h1m10 0h1m9 0h1m9 0h1m9 0h1m10 0h1m9 0h1m9 0h1m9 0h1m10 0h1m9 0h1m9 0h1m9 0h1m10 0h1m9 0h1m9 0h1m9 0h1m10 0h1m9 0h1m9 0h1m9 0h1m10 0h1m9 0h1m9 0h1m9 0h1m10 0h1m9 0h1m9 0h1m9 0h1m10 0h1m9 0h1m9 0h1m9 0h1m10 0h1m9 0h1m9 0h1m9 0h1m10 0h1m9 0h1m9 0h1m9 0h1m10 0h1m9 0h1m9 0h1m9 0h1m10 0h1m9 0h1m9 0h1m9 0h1m10 0h1m9 0h1m9 0h1m9 0h1m10 0h1m9 0h1m9 0h1m9 0h1m10 0h1m9 0h1m9 0h1m9 0h1m10 0h1m9 0h1m9 0h1m9 0h1m10 0h1m9 0h1m9 0h1m9 0h1m10 0h1m9 0h1m9 0h1m9 0h1m10 0h1m9 0h1m9 0h1M95 445.5h1m9 0h1m9 0h1m10 0h1m9 0h1m9 0h1m9 0h1m10 0h1m9 0h1m9 0h1m9 0h1m10 0h1m9 0h1m9 0h1m9 0h1m10 0h1m9 0h1m9 0h1m9 0h1m10 0h1m9 0h1m9 0h1m9 0h1m10 0h1m9 0h1m9 0h1m9 0h1m10 0h1m9 0h1m9 0h1m9 0h1m10 0h1m9 0h1m9 0h1m9 0h1m10 0h1m9 0h1m9 0h1m9 0h1m10 0h1m9 0h1m9 0h1m9 0h1m10 0h1m9 0h1m9 0h1m9 0h1m10 0h1m9 0h1m9 0h1m9 0h1m10 0h1m9 0h1m9 0h1m9 0h1m10 0h1m9 0h1m9 0h1m9 0h1m10 0h1m9 0h1m9 0h1m9 0h1m10 0h1m9 0h1m9 0h1m9 0h1m10 0h1m9 0h1m9 0h1m9 0h1m10 0h1m9 0h1m9 0h1m9 0h1m10 0h1m9 0h1m9 0h1m9 0h1m10 0h1m9 0h1m9 0h1m9 0h1m10 0h1m9 0h1m9 0h1m9 0h1m10 0h1m9 0h1m9 0h1m9 0h1m10 0h1m9 0h1m9 0h1m9 0h1m10 0h1m9 0h1m9 0h1m9 0h1m10 0h1m9 0h1m9 0h1M95 435.5h1m9 0h1m9 0h1m10 0h1m9 0h1m9 0h1m9 0h1m10 0h1m9 0h1m9 0h1m9 0h1m10 0h1m9 0h1m9 0h1m9 0h1m10 0h1m9 0h1m9 0h1m9 0h1m10 0h1m9 0h1m9 0h1m9 0h1m10 0h1m9 0h1m9 0h1m9 0h1m10 0h1m9 0h1m9 0h1m9 0h1m10 0h1m9 0h1m9 0h1m9 0h1m10 0h1m9 0h1m9 0h1m9 0h1m10 0h1m9 0h1m9 0h1m9 0h1m10 0h1m9 0h1m9 0h1m9 0h1m10 0h1m9 0h1m9 0h1m9 0h1m10 0h1m9 0h1m9 0h1m9 0h1m10 0h1m9 0h1m9 0h1m9 0h1m10 0h1m9 0h1m9 0h1m9 0h1m10 0h1m9 0h1m9 0h1m9 0h1m10 0h1m9 0h1m9 0h1m9 0h1m10 0h1m9 0h1m9 0h1m9 0h1m10 0h1m9 0h1m9 0h1m9 0h1m10 0h1m9 0h1m9 0h1m9 0h1m10 0h1m9 0h1m9 0h1m9 0h1m10 0h1m9 0h1m9 0h1m9 0h1m10 0h1m9 0h1m9 0h1m9 0h1m10 0h1m9 0h1m9 0h1m9 0h1m10 0h1m9 0h1m9 0h1M95 424.5h1m9 0h1m9 0h1m10 0h1m9 0h1m9 0h1m9 0h1m10 0h1m9 0h1m9 0h1m9 0h1m10 0h1m9 0h1m9 0h1m9 0h1m10 0h1m9 0h1m9 0h1m9 0h1m10 0h1m9 0h1m9 0h1m9 0h1m10 0h1m9 0h1m9 0h1m9 0h1m10 0h1m9 0h1m9 0h1m9 0h1m10 0h1m9 0h1m9 0h1m9 0h1m10 0h1m9 0h1m9 0h1m9 0h1m10 0h1m9 0h1m9 0h1m9 0h1m10 0h1m9 0h1m9 0h1m9 0h1m10 0h1m9 0h1m9 0h1m9 0h1m10 0h1m9 0h1m9 0h1m9 0h1m10 0h1m9 0h1m9 0h1m9 0h1m10 0h1m9 0h1m9 0h1m9 0h1m10 0h1m9 0h1m9 0h1m9 0h1m10 0h1m9 0h1m9 0h1m9 0h1m10 0h1m9 0h1m9 0h1m9 0h1m10 0h1m9 0h1m9 0h1m9 0h1m10 0h1m9 0h1m9 0h1m9 0h1m10 0h1m9 0h1m9 0h1m9 0h1m10 0h1m9 0h1m9 0h1m9 0h1m10 0h1m9 0h1m9 0h1m9 0h1m10 0h1m9 0h1m9 0h1m9 0h1m10 0h1m9 0h1m9 0h1M95 414.5h1m9 0h1m9 0h1m10 0h1m9 0h1m9 0h1m9 0h1m10 0h1m9 0h1m9 0h1m9 0h1m10 0h1m9 0h1m9 0h1m9 0h1m10 0h1m9 0h1m9 0h1m9 0h1m10 0h1m9 0h1m9 0h1m9 0h1m10 0h1m9 0h1m9 0h1m9 0h1m10 0h1m9 0h1m9 0h1m9 0h1m10 0h1m9 0h1m9 0h1m9 0h1m10 0h1m9 0h1m9 0h1m9 0h1m10 0h1m9 0h1m9 0h1m9 0h1m10 0h1m9 0h1m9 0h1m9 0h1m10 0h1m9 0h1m9 0h1m9 0h1m10 0h1m9 0h1m9 0h1m9 0h1m10 0h1m9 0h1m9 0h1m9 0h1m10 0h1m9 0h1m9 0h1m9 0h1m10 0h1m9 0h1m9 0h1m9 0h1m10 0h1m9 0h1m9 0h1m9 0h1m10 0h1m9 0h1m9 0h1m9 0h1m10 0h1m9 0h1m9 0h1m9 0h1m10 0h1m9 0h1m9 0h1m9 0h1m10 0h1m9 0h1m9 0h1m9 0h1m10 0h1m9 0h1m9 0h1m9 0h1m10 0h1m9 0h1m9 0h1m9 0h1m10 0h1m9 0h1m9 0h1m9 0h1m10 0h1m9 0h1m9 0h1M95 404.5h1m9 0h1m9 0h1m10 0h1m9 0h1m9 0h1m9 0h1m10 0h1m9 0h1m9 0h1m9 0h1m10 0h1m9 0h1m9 0h1m9 0h1m10 0h1m9 0h1m9 0h1m9 0h1m10 0h1m9 0h1m9 0h1m9 0h1m10 0h1m9 0h1m9 0h1m9 0h1m10 0h1m9 0h1m9 0h1m9 0h1m10 0h1m9 0h1m9 0h1m9 0h1m10 0h1m9 0h1m9 0h1m9 0h1m10 0h1m9 0h1m9 0h1m9 0h1m10 0h1m9 0h1m9 0h1m9 0h1m10 0h1m9 0h1m9 0h1m9 0h1m10 0h1m9 0h1m9 0h1m9 0h1m10 0h1m9 0h1m9 0h1m9 0h1m10 0h1m9 0h1m9 0h1m9 0h1m10 0h1m9 0h1m9 0h1m9 0h1m10 0h1m9 0h1m9 0h1m9 0h1m10 0h1m9 0h1m9 0h1m9 0h1m10 0h1m9 0h1m9 0h1m9 0h1m10 0h1m9 0h1m9 0h1m9 0h1m10 0h1m9 0h1m9 0h1m9 0h1m10 0h1m9 0h1m9 0h1m9 0h1m10 0h1m9 0h1m9 0h1m9 0h1m10 0h1m9 0h1m9 0h1m9 0h1m10 0h1m9 0h1m9 0h1M95 394.5h1m9 0h1m9 0h1m10 0h1m9 0h1m9 0h1m9 0h1m10 0h1m9 0h1m9 0h1m9 0h1m10 0h1m9 0h1m9 0h1m9 0h1m10 0h1m9 0h1m9 0h1m9 0h1m10 0h1m9 0h1m9 0h1m9 0h1m10 0h1m9 0h1m9 0h1m9 0h1m10 0h1m9 0h1m9 0h1m9 0h1m10 0h1m9 0h1m9 0h1m9 0h1m10 0h1m9 0h1m9 0h1m9 0h1m10 0h1m9 0h1m9 0h1m9 0h1m10 0h1m9 0h1m9 0h1m9 0h1m10 0h1m9 0h1m9 0h1m9 0h1m10 0h1m9 0h1m9 0h1m9 0h1m10 0h1m9 0h1m9 0h1m9 0h1m10 0h1m9 0h1m9 0h1m9 0h1m10 0h1m9 0h1m9 0h1m9 0h1m10 0h1m9 0h1m9 0h1m9 0h1m10 0h1m9 0h1m9 0h1m9 0h1m10 0h1m9 0h1m9 0h1m9 0h1m10 0h1m9 0h1m9 0h1m9 0h1m10 0h1m9 0h1m9 0h1m9 0h1m10 0h1m9 0h1m9 0h1m9 0h1m10 0h1m9 0h1m9 0h1m9 0h1m10 0h1m9 0h1m9 0h1m9 0h1m10 0h1m9 0h1m9 0h1M95 383.5h1m9 0h1m9 0h1m10 0h1m9 0h1m9 0h1m9 0h1m10 0h1m9 0h1m9 0h1m9 0h1m10 0h1m9 0h1m9 0h1m9 0h1m10 0h1m9 0h1m9 0h1m9 0h1m10 0h1m9 0h1m9 0h1m9 0h1m10 0h1m9 0h1m9 0h1m9 0h1m10 0h1m9 0h1m9 0h1m9 0h1m10 0h1m9 0h1m9 0h1m9 0h1m10 0h1m9 0h1m9 0h1m9 0h1m10 0h1m9 0h1m9 0h1m9 0h1m10 0h1m9 0h1m9 0h1m9 0h1m10 0h1m9 0h1m9 0h1m9 0h1m10 0h1m9 0h1m9 0h1m9 0h1m10 0h1m9 0h1m9 0h1m9 0h1m10 0h1m9 0h1m9 0h1m9 0h1m10 0h1m9 0h1m9 0h1m9 0h1m10 0h1m9 0h1m9 0h1m9 0h1m10 0h1m9 0h1m9 0h1m9 0h1m10 0h1m9 0h1m9 0h1m9 0h1m10 0h1m9 0h1m9 0h1m9 0h1m10 0h1m9 0h1m9 0h1m9 0h1m10 0h1m9 0h1m9 0h1m9 0h1m10 0h1m9 0h1m9 0h1m9 0h1m10 0h1m9 0h1m9 0h1m9 0h1m10 0h1m9 0h1m9 0h1M95 373.5h1m9 0h1m9 0h1m10 0h1m9 0h1m9 0h1m9 0h1m10 0h1m9 0h1m9 0h1m9 0h1m10 0h1m9 0h1m9 0h1m9 0h1m10 0h1m9 0h1m9 0h1m9 0h1m10 0h1m9 0h1m9 0h1m9 0h1m10 0h1m9 0h1m9 0h1m9 0h1m10 0h1m9 0h1m9 0h1m9 0h1m10 0h1m9 0h1m9 0h1m9 0h1m10 0h1m9 0h1m9 0h1m9 0h1m10 0h1m9 0h1m9 0h1m9 0h1m10 0h1m9 0h1m9 0h1m9 0h1m10 0h1m9 0h1m9 0h1m9 0h1m10 0h1m9 0h1m9 0h1m9 0h1m10 0h1m9 0h1m9 0h1m9 0h1m10 0h1m9 0h1m9 0h1m9 0h1m10 0h1m9 0h1m9 0h1m9 0h1m10 0h1m9 0h1m9 0h1m9 0h1m10 0h1m9 0h1m9 0h1m9 0h1m10 0h1m9 0h1m9 0h1m9 0h1m10 0h1m9 0h1m9 0h1m9 0h1m10 0h1m9 0h1m9 0h1m9 0h1m10 0h1m9 0h1m9 0h1m9 0h1m10 0h1m9 0h1m9 0h1m9 0h1m10 0h1m9 0h1m9 0h1m9 0h1m10 0h1m9 0h1m9 0h1M95 363.5h1m9 0h1m9 0h1m10 0h1m9 0h1m9 0h1m9 0h1m10 0h1m9 0h1m9 0h1m9 0h1m10 0h1m9 0h1m9 0h1m9 0h1m10 0h1m9 0h1m9 0h1m9 0h1m10 0h1m9 0h1m9 0h1m9 0h1m10 0h1m9 0h1m9 0h1m9 0h1m10 0h1m9 0h1m9 0h1m9 0h1m10 0h1m9 0h1m9 0h1m9 0h1m10 0h1m9 0h1m9 0h1m9 0h1m10 0h1m9 0h1m9 0h1m9 0h1m10 0h1m9 0h1m9 0h1m9 0h1m10 0h1m9 0h1m9 0h1m9 0h1m10 0h1m9 0h1m9 0h1m9 0h1m10 0h1m9 0h1m9 0h1m9 0h1m10 0h1m9 0h1m9 0h1m9 0h1m10 0h1m9 0h1m9 0h1m9 0h1m10 0h1m9 0h1m9 0h1m9 0h1m10 0h1m9 0h1m9 0h1m9 0h1m10 0h1m9 0h1m9 0h1m9 0h1m10 0h1m9 0h1m9 0h1m9 0h1m10 0h1m9 0h1m9 0h1m9 0h1m10 0h1m9 0h1m9 0h1m9 0h1m10 0h1m9 0h1m9 0h1m9 0h1m10 0h1m9 0h1m9 0h1m9 0h1m10 0h1m9 0h1m9 0h1M95 353.5h1m9 0h1m9 0h1m10 0h1m9 0h1m9 0h1m9 0h1m10 0h1m9 0h1m9 0h1m9 0h1m10 0h1m9 0h1m9 0h1m9 0h1m10 0h1m9 0h1m9 0h1m9 0h1m10 0h1m9 0h1m9 0h1m9 0h1m10 0h1m9 0h1m9 0h1m9 0h1m10 0h1m9 0h1m9 0h1m9 0h1m10 0h1m9 0h1m9 0h1m9 0h1m10 0h1m9 0h1m9 0h1m9 0h1m10 0h1m9 0h1m9 0h1m9 0h1m10 0h1m9 0h1m9 0h1m9 0h1m10 0h1m9 0h1m9 0h1m9 0h1m10 0h1m9 0h1m9 0h1m9 0h1m10 0h1m9 0h1m9 0h1m9 0h1m10 0h1m9 0h1m9 0h1m9 0h1m10 0h1m9 0h1m9 0h1m9 0h1m10 0h1m9 0h1m9 0h1m9 0h1m10 0h1m9 0h1m9 0h1m9 0h1m10 0h1m9 0h1m9 0h1m9 0h1m10 0h1m9 0h1m9 0h1m9 0h1m10 0h1m9 0h1m9 0h1m9 0h1m10 0h1m9 0h1m9 0h1m9 0h1m10 0h1m9 0h1m9 0h1m9 0h1m10 0h1m9 0h1m9 0h1m9 0h1m10 0h1m9 0h1m9 0h1M95 342.5h1m9 0h1m9 0h1m10 0h1m9 0h1m9 0h1m9 0h1m10 0h1m9 0h1m9 0h1m9 0h1m10 0h1m9 0h1m9 0h1m9 0h1m10 0h1m9 0h1m9 0h1m9 0h1m10 0h1m9 0h1m9 0h1m9 0h1m10 0h1m9 0h1m9 0h1m9 0h1m10 0h1m9 0h1m9 0h1m9 0h1m10 0h1m9 0h1m9 0h1m9 0h1m10 0h1m9 0h1m9 0h1m9 0h1m10 0h1m9 0h1m9 0h1m9 0h1m10 0h1m9 0h1m9 0h1m9 0h1m10 0h1m9 0h1m9 0h1m9 0h1m10 0h1m9 0h1m9 0h1m9 0h1m10 0h1m9 0h1m9 0h1m9 0h1m10 0h1m9 0h1m9 0h1m9 0h1m10 0h1m9 0h1m9 0h1m9 0h1m10 0h1m9 0h1m9 0h1m9 0h1m10 0h1m9 0h1m9 0h1m9 0h1m10 0h1m9 0h1m9 0h1m9 0h1m10 0h1m9 0h1m9 0h1m9 0h1m10 0h1m9 0h1m9 0h1m9 0h1m10 0h1m9 0h1m9 0h1m9 0h1m10 0h1m9 0h1m9 0h1m9 0h1m10 0h1m9 0h1m9 0h1m9 0h1m10 0h1m9 0h1m9 0h1M95 332.5h1m9 0h1m9 0h1m10 0h1m9 0h1m9 0h1m9 0h1m10 0h1m9 0h1m9 0h1m9 0h1m10 0h1m9 0h1m9 0h1m9 0h1m10 0h1m9 0h1m9 0h1m9 0h1m10 0h1m9 0h1m9 0h1m9 0h1m10 0h1m9 0h1m9 0h1m9 0h1m10 0h1m9 0h1m9 0h1m9 0h1m10 0h1m9 0h1m9 0h1m9 0h1m10 0h1m9 0h1m9 0h1m9 0h1m10 0h1m9 0h1m9 0h1m9 0h1m10 0h1m9 0h1m9 0h1m9 0h1m10 0h1m9 0h1m9 0h1m9 0h1m10 0h1m9 0h1m9 0h1m9 0h1m10 0h1m9 0h1m9 0h1m9 0h1m10 0h1m9 0h1m9 0h1m9 0h1m10 0h1m9 0h1m9 0h1m9 0h1m10 0h1m9 0h1m9 0h1m9 0h1m10 0h1m9 0h1m9 0h1m9 0h1m10 0h1m9 0h1m9 0h1m9 0h1m10 0h1m9 0h1m9 0h1m9 0h1m10 0h1m9 0h1m9 0h1m9 0h1m10 0h1m9 0h1m9 0h1m9 0h1m10 0h1m9 0h1m9 0h1m9 0h1m10 0h1m9 0h1m9 0h1m9 0h1m10 0h1m9 0h1m9 0h1M95 322.5h1m9 0h1m9 0h1m10 0h1m9 0h1m9 0h1m9 0h1m10 0h1m9 0h1m9 0h1m9 0h1m10 0h1m9 0h1m9 0h1m9 0h1m10 0h1m9 0h1m9 0h1m9 0h1m10 0h1m9 0h1m9 0h1m9 0h1m10 0h1m9 0h1m9 0h1m9 0h1m10 0h1m9 0h1m9 0h1m9 0h1m10 0h1m9 0h1m9 0h1m9 0h1m10 0h1m9 0h1m9 0h1m9 0h1m10 0h1m9 0h1m9 0h1m9 0h1m10 0h1m9 0h1m9 0h1m9 0h1m10 0h1m9 0h1m9 0h1m9 0h1m10 0h1m9 0h1m9 0h1m9 0h1m10 0h1m9 0h1m9 0h1m9 0h1m10 0h1m9 0h1m9 0h1m9 0h1m10 0h1m9 0h1m9 0h1m9 0h1m10 0h1m9 0h1m9 0h1m9 0h1m10 0h1m9 0h1m9 0h1m9 0h1m10 0h1m9 0h1m9 0h1m9 0h1m10 0h1m9 0h1m9 0h1m9 0h1m10 0h1m9 0h1m9 0h1m9 0h1m10 0h1m9 0h1m9 0h1m9 0h1m10 0h1m9 0h1m9 0h1m9 0h1m10 0h1m9 0h1m9 0h1m9 0h1m10 0h1m9 0h1m9 0h1M95 312.5h1m9 0h1m9 0h1m10 0h1m9 0h1m9 0h1m9 0h1m10 0h1m9 0h1m9 0h1m9 0h1m10 0h1m9 0h1m9 0h1m9 0h1m10 0h1m9 0h1m9 0h1m9 0h1m10 0h1m9 0h1m9 0h1m9 0h1m10 0h1m9 0h1m9 0h1m9 0h1m10 0h1m9 0h1m9 0h1m9 0h1m10 0h1m9 0h1m9 0h1m9 0h1m10 0h1m9 0h1m9 0h1m9 0h1m10 0h1m9 0h1m9 0h1m9 0h1m10 0h1m9 0h1m9 0h1m9 0h1m10 0h1m9 0h1m9 0h1m9 0h1m10 0h1m9 0h1m9 0h1m9 0h1m10 0h1m9 0h1m9 0h1m9 0h1m10 0h1m9 0h1m9 0h1m9 0h1m10 0h1m9 0h1m9 0h1m9 0h1m10 0h1m9 0h1m9 0h1m9 0h1m10 0h1m9 0h1m9 0h1m9 0h1m10 0h1m9 0h1m9 0h1m9 0h1m10 0h1m9 0h1m9 0h1m9 0h1m10 0h1m9 0h1m9 0h1m9 0h1m10 0h1m9 0h1m9 0h1m9 0h1m10 0h1m9 0h1m9 0h1m9 0h1m10 0h1m9 0h1m9 0h1m9 0h1m10 0h1m9 0h1m9 0h1M95 301.5h1m9 0h1m9 0h1m10 0h1m9 0h1m9 0h1m9 0h1m10 0h1m9 0h1m9 0h1m9 0h1m10 0h1m9 0h1m9 0h1m9 0h1m10 0h1m9 0h1m9 0h1m9 0h1m10 0h1m9 0h1m9 0h1m9 0h1m10 0h1m9 0h1m9 0h1m9 0h1m10 0h1m9 0h1m9 0h1m9 0h1m10 0h1m9 0h1m9 0h1m9 0h1m10 0h1m9 0h1m9 0h1m9 0h1m10 0h1m9 0h1m9 0h1m9 0h1m10 0h1m9 0h1m9 0h1m9 0h1m10 0h1m9 0h1m9 0h1m9 0h1m10 0h1m9 0h1m9 0h1m9 0h1m10 0h1m9 0h1m9 0h1m9 0h1m10 0h1m9 0h1m9 0h1m9 0h1m10 0h1m9 0h1m9 0h1m9 0h1m10 0h1m9 0h1m9 0h1m9 0h1m10 0h1m9 0h1m9 0h1m9 0h1m10 0h1m9 0h1m9 0h1m9 0h1m10 0h1m9 0h1m9 0h1m9 0h1m10 0h1m9 0h1m9 0h1m9 0h1m10 0h1m9 0h1m9 0h1m9 0h1m10 0h1m9 0h1m9 0h1m9 0h1m10 0h1m9 0h1m9 0h1m9 0h1m10 0h1m9 0h1m9 0h1M95 291.5h1m9 0h1m9 0h1m10 0h1m9 0h1m9 0h1m9 0h1m10 0h1m9 0h1m9 0h1m9 0h1m10 0h1m9 0h1m9 0h1m9 0h1m10 0h1m9 0h1m9 0h1m9 0h1m10 0h1m9 0h1m9 0h1m9 0h1m10 0h1m9 0h1m9 0h1m9 0h1m10 0h1m9 0h1m9 0h1m9 0h1m10 0h1m9 0h1m9 0h1m9 0h1m10 0h1m9 0h1m9 0h1m9 0h1m10 0h1m9 0h1m9 0h1m9 0h1m10 0h1m9 0h1m9 0h1m9 0h1m10 0h1m9 0h1m9 0h1m9 0h1m10 0h1m9 0h1m9 0h1m9 0h1m10 0h1m9 0h1m9 0h1m9 0h1m10 0h1m9 0h1m9 0h1m9 0h1m10 0h1m9 0h1m9 0h1m9 0h1m10 0h1m9 0h1m9 0h1m9 0h1m10 0h1m9 0h1m9 0h1m9 0h1m10 0h1m9 0h1m9 0h1m9 0h1m10 0h1m9 0h1m9 0h1m9 0h1m10 0h1m9 0h1m9 0h1m9 0h1m10 0h1m9 0h1m9 0h1m9 0h1m10 0h1m9 0h1m9 0h1m9 0h1m10 0h1m9 0h1m9 0h1m9 0h1m10 0h1m9 0h1m9 0h1M95 281.5h1m9 0h1m9 0h1m10 0h1m9 0h1m9 0h1m9 0h1m10 0h1m9 0h1m9 0h1m9 0h1m10 0h1m9 0h1m9 0h1m9 0h1m10 0h1m9 0h1m9 0h1m9 0h1m10 0h1m9 0h1m9 0h1m9 0h1m10 0h1m9 0h1m9 0h1m9 0h1m10 0h1m9 0h1m9 0h1m9 0h1m10 0h1m9 0h1m9 0h1m9 0h1m10 0h1m9 0h1m9 0h1m9 0h1m10 0h1m9 0h1m9 0h1m9 0h1m10 0h1m9 0h1m9 0h1m9 0h1m10 0h1m9 0h1m9 0h1m9 0h1m10 0h1m9 0h1m9 0h1m9 0h1m10 0h1m9 0h1m9 0h1m9 0h1m10 0h1m9 0h1m9 0h1m9 0h1m10 0h1m9 0h1m9 0h1m9 0h1m10 0h1m9 0h1m9 0h1m9 0h1m10 0h1m9 0h1m9 0h1m9 0h1m10 0h1m9 0h1m9 0h1m9 0h1m10 0h1m9 0h1m9 0h1m9 0h1m10 0h1m9 0h1m9 0h1m9 0h1m10 0h1m9 0h1m9 0h1m9 0h1m10 0h1m9 0h1m9 0h1m9 0h1m10 0h1m9 0h1m9 0h1m9 0h1m10 0h1m9 0h1m9 0h1M95 271.5h1m9 0h1m9 0h1m10 0h1m9 0h1m9 0h1m9 0h1m10 0h1m9 0h1m9 0h1m9 0h1m10 0h1m9 0h1m9 0h1m9 0h1m10 0h1m9 0h1m9 0h1m9 0h1m10 0h1m9 0h1m9 0h1m9 0h1m10 0h1m9 0h1m9 0h1m9 0h1m10 0h1m9 0h1m9 0h1m9 0h1m10 0h1m9 0h1m9 0h1m9 0h1m10 0h1m9 0h1m9 0h1m9 0h1m10 0h1m9 0h1m9 0h1m9 0h1m10 0h1m9 0h1m9 0h1m9 0h1m10 0h1m9 0h1m9 0h1m9 0h1m10 0h1m9 0h1m9 0h1m9 0h1m10 0h1m9 0h1m9 0h1m9 0h1m10 0h1m9 0h1m9 0h1m9 0h1m10 0h1m9 0h1m9 0h1m9 0h1m10 0h1m9 0h1m9 0h1m9 0h1m10 0h1m9 0h1m9 0h1m9 0h1m10 0h1m9 0h1m9 0h1m9 0h1m10 0h1m9 0h1m9 0h1m9 0h1m10 0h1m9 0h1m9 0h1m9 0h1m10 0h1m9 0h1m9 0h1m9 0h1m10 0h1m9 0h1m9 0h1m9 0h1m10 0h1m9 0h1m9 0h1m9 0h1m10 0h1m9 0h1m9 0h1M95 260.5h1m9 0h1m9 0h1m10 0h1m9 0h1m9 0h1m9 0h1m10 0h1m9 0h1m9 0h1m9 0h1m10 0h1m9 0h1m9 0h1m9 0h1m10 0h1m9 0h1m9 0h1m9 0h1m10 0h1m9 0h1m9 0h1m9 0h1m10 0h1m9 0h1m9 0h1m9 0h1m10 0h1m9 0h1m9 0h1m9 0h1m10 0h1m9 0h1m9 0h1m9 0h1m10 0h1m9 0h1m9 0h1m9 0h1m10 0h1m9 0h1m9 0h1m9 0h1m10 0h1m9 0h1m9 0h1m9 0h1m10 0h1m9 0h1m9 0h1m9 0h1m10 0h1m9 0h1m9 0h1m9 0h1m10 0h1m9 0h1m9 0h1m9 0h1m10 0h1m9 0h1m9 0h1m9 0h1m10 0h1m9 0h1m9 0h1m9 0h1m10 0h1m9 0h1m9 0h1m9 0h1m10 0h1m9 0h1m9 0h1m9 0h1m10 0h1m9 0h1m9 0h1m9 0h1m10 0h1m9 0h1m9 0h1m9 0h1m10 0h1m9 0h1m9 0h1m9 0h1m10 0h1m9 0h1m9 0h1m9 0h1m10 0h1m9 0h1m9 0h1m9 0h1m10 0h1m9 0h1m9 0h1m9 0h1m10 0h1m9 0h1m9 0h1M95 250.5h1m9 0h1m9 0h1m10 0h1m9 0h1m9 0h1m9 0h1m10 0h1m9 0h1m9 0h1m9 0h1m10 0h1m9 0h1m9 0h1m9 0h1m10 0h1m9 0h1m9 0h1m9 0h1m10 0h1m9 0h1m9 0h1m9 0h1m10 0h1m9 0h1m9 0h1m9 0h1m10 0h1m9 0h1m9 0h1m9 0h1m10 0h1m9 0h1m9 0h1m9 0h1m10 0h1m9 0h1m9 0h1m9 0h1m10 0h1m9 0h1m9 0h1m9 0h1m10 0h1m9 0h1m9 0h1m9 0h1m10 0h1m9 0h1m9 0h1m9 0h1m10 0h1m9 0h1m9 0h1m9 0h1m10 0h1m9 0h1m9 0h1m9 0h1m10 0h1m9 0h1m9 0h1m9 0h1m10 0h1m9 0h1m9 0h1m9 0h1m10 0h1m9 0h1m9 0h1m9 0h1m10 0h1m9 0h1m9 0h1m9 0h1m10 0h1m9 0h1m9 0h1m9 0h1m10 0h1m9 0h1m9 0h1m9 0h1m10 0h1m9 0h1m9 0h1m9 0h1m10 0h1m9 0h1m9 0h1m9 0h1m10 0h1m9 0h1m9 0h1m9 0h1m10 0h1m9 0h1m9 0h1m9 0h1m10 0h1m9 0h1m9 0h1M95 240.5h1m9 0h1m9 0h1m10 0h1m9 0h1m9 0h1m9 0h1m10 0h1m9 0h1m9 0h1m9 0h1m10 0h1m9 0h1m9 0h1m9 0h1m10 0h1m9 0h1m9 0h1m9 0h1m10 0h1m9 0h1m9 0h1m9 0h1m10 0h1m9 0h1m9 0h1m9 0h1m10 0h1m9 0h1m9 0h1m9 0h1m10 0h1m9 0h1m9 0h1m9 0h1m10 0h1m9 0h1m9 0h1m9 0h1m10 0h1m9 0h1m9 0h1m9 0h1m10 0h1m9 0h1m9 0h1m9 0h1m10 0h1m9 0h1m9 0h1m9 0h1m10 0h1m9 0h1m9 0h1m9 0h1m10 0h1m9 0h1m9 0h1m9 0h1m10 0h1m9 0h1m9 0h1m9 0h1m10 0h1m9 0h1m9 0h1m9 0h1m10 0h1m9 0h1m9 0h1m9 0h1m10 0h1m9 0h1m9 0h1m9 0h1m10 0h1m9 0h1m9 0h1m9 0h1m10 0h1m9 0h1m9 0h1m9 0h1m10 0h1m9 0h1m9 0h1m9 0h1m10 0h1m9 0h1m9 0h1m9 0h1m10 0h1m9 0h1m9 0h1m9 0h1m10 0h1m9 0h1m9 0h1m9 0h1m10 0h1m9 0h1m9 0h1M95 230.5h1m9 0h1m9 0h1m10 0h1m9 0h1m9 0h1m9 0h1m10 0h1m9 0h1m9 0h1m9 0h1m10 0h1m9 0h1m9 0h1m9 0h1m10 0h1m9 0h1m9 0h1m9 0h1m10 0h1m9 0h1m9 0h1m9 0h1m10 0h1m9 0h1m9 0h1m9 0h1m10 0h1m9 0h1m9 0h1m9 0h1m10 0h1m9 0h1m9 0h1m9 0h1m10 0h1m9 0h1m9 0h1m9 0h1m10 0h1m9 0h1m9 0h1m9 0h1m10 0h1m9 0h1m9 0h1m9 0h1m10 0h1m9 0h1m9 0h1m9 0h1m10 0h1m9 0h1m9 0h1m9 0h1m10 0h1m9 0h1m9 0h1m9 0h1m10 0h1m9 0h1m9 0h1m9 0h1m10 0h1m9 0h1m9 0h1m9 0h1m10 0h1m9 0h1m9 0h1m9 0h1m10 0h1m9 0h1m9 0h1m9 0h1m10 0h1m9 0h1m9 0h1m9 0h1m10 0h1m9 0h1m9 0h1m9 0h1m10 0h1m9 0h1m9 0h1m9 0h1m10 0h1m9 0h1m9 0h1m9 0h1m10 0h1m9 0h1m9 0h1m9 0h1m10 0h1m9 0h1m9 0h1m9 0h1m10 0h1m9 0h1m9 0h1M95 219.5h1m9 0h1m9 0h1m10 0h1m9 0h1m9 0h1m9 0h1m10 0h1m9 0h1m9 0h1m9 0h1m10 0h1m9 0h1m9 0h1m9 0h1m10 0h1m9 0h1m9 0h1m9 0h1m10 0h1m9 0h1m9 0h1m9 0h1m10 0h1m9 0h1m9 0h1m9 0h1m10 0h1m9 0h1m9 0h1m9 0h1m10 0h1m9 0h1m9 0h1m9 0h1m10 0h1m9 0h1m9 0h1m9 0h1m10 0h1m9 0h1m9 0h1m9 0h1m10 0h1m9 0h1m9 0h1m9 0h1m10 0h1m9 0h1m9 0h1m9 0h1m10 0h1m9 0h1m9 0h1m9 0h1m10 0h1m9 0h1m9 0h1m9 0h1m10 0h1m9 0h1m9 0h1m9 0h1m10 0h1m9 0h1m9 0h1m9 0h1m10 0h1m9 0h1m9 0h1m9 0h1m10 0h1m9 0h1m9 0h1m9 0h1m10 0h1m9 0h1m9 0h1m9 0h1m10 0h1m9 0h1m9 0h1m9 0h1m10 0h1m9 0h1m9 0h1m9 0h1m10 0h1m9 0h1m9 0h1m9 0h1m10 0h1m9 0h1m9 0h1m9 0h1m10 0h1m9 0h1m9 0h1m9 0h1m10 0h1m9 0h1m9 0h1M95 209.5h1m9 0h1m9 0h1m10 0h1m9 0h1m9 0h1m9 0h1m10 0h1m9 0h1m9 0h1m9 0h1m10 0h1m9 0h1m9 0h1m9 0h1m10 0h1m9 0h1m9 0h1m9 0h1m10 0h1m9 0h1m9 0h1m9 0h1m10 0h1m9 0h1m9 0h1m9 0h1m10 0h1m9 0h1m9 0h1m9 0h1m10 0h1m9 0h1m9 0h1m9 0h1m10 0h1m9 0h1m9 0h1m9 0h1m10 0h1m9 0h1m9 0h1m9 0h1m10 0h1m9 0h1m9 0h1m9 0h1m10 0h1m9 0h1m9 0h1m9 0h1m10 0h1m9 0h1m9 0h1m9 0h1m10 0h1m9 0h1m9 0h1m9 0h1m10 0h1m9 0h1m9 0h1m9 0h1m10 0h1m9 0h1m9 0h1m9 0h1m10 0h1m9 0h1m9 0h1m9 0h1m10 0h1m9 0h1m9 0h1m9 0h1m10 0h1m9 0h1m9 0h1m9 0h1m10 0h1m9 0h1m9 0h1m9 0h1m10 0h1m9 0h1m9 0h1m9 0h1m10 0h1m9 0h1m9 0h1m9 0h1m10 0h1m9 0h1m9 0h1m9 0h1m10 0h1m9 0h1m9 0h1m9 0h1m10 0h1m9 0h1m9 0h1M95 199.5h1m9 0h1m9 0h1m10 0h1m9 0h1m9 0h1m9 0h1m10 0h1m9 0h1m9 0h1m9 0h1m10 0h1m9 0h1m9 0h1m9 0h1m10 0h1m9 0h1m9 0h1m9 0h1m10 0h1m9 0h1m9 0h1m9 0h1m10 0h1m9 0h1m9 0h1m9 0h1m10 0h1m9 0h1m9 0h1m9 0h1m10 0h1m9 0h1m9 0h1m9 0h1m10 0h1m9 0h1m9 0h1m9 0h1m10 0h1m9 0h1m9 0h1m9 0h1m10 0h1m9 0h1m9 0h1m9 0h1m10 0h1m9 0h1m9 0h1m9 0h1m10 0h1m9 0h1m9 0h1m9 0h1m10 0h1m9 0h1m9 0h1m9 0h1m10 0h1m9 0h1m9 0h1m9 0h1m10 0h1m9 0h1m9 0h1m9 0h1m10 0h1m9 0h1m9 0h1m9 0h1m10 0h1m9 0h1m9 0h1m9 0h1m10 0h1m9 0h1m9 0h1m9 0h1m10 0h1m9 0h1m9 0h1m9 0h1m10 0h1m9 0h1m9 0h1m9 0h1m10 0h1m9 0h1m9 0h1m9 0h1m10 0h1m9 0h1m9 0h1m9 0h1m10 0h1m9 0h1m9 0h1m9 0h1m10 0h1m9 0h1m9 0h1M95 189.5h1m9 0h1m9 0h1m10 0h1m9 0h1m9 0h1m9 0h1m10 0h1m9 0h1m9 0h1m9 0h1m10 0h1m9 0h1m9 0h1m9 0h1m10 0h1m9 0h1m9 0h1m9 0h1m10 0h1m9 0h1m9 0h1m9 0h1m10 0h1m9 0h1m9 0h1m9 0h1m10 0h1m9 0h1m9 0h1m9 0h1m10 0h1m9 0h1m9 0h1m9 0h1m10 0h1m9 0h1m9 0h1m9 0h1m10 0h1m9 0h1m9 0h1m9 0h1m10 0h1m9 0h1m9 0h1m9 0h1m10 0h1m9 0h1m9 0h1m9 0h1m10 0h1m9 0h1m9 0h1m9 0h1m10 0h1m9 0h1m9 0h1m9 0h1m10 0h1m9 0h1m9 0h1m9 0h1m10 0h1m9 0h1m9 0h1m9 0h1m10 0h1m9 0h1m9 0h1m9 0h1m10 0h1m9 0h1m9 0h1m9 0h1m10 0h1m9 0h1m9 0h1m9 0h1m10 0h1m9 0h1m9 0h1m9 0h1m10 0h1m9 0h1m9 0h1m9 0h1m10 0h1m9 0h1m9 0h1m9 0h1m10 0h1m9 0h1m9 0h1m9 0h1m10 0h1m9 0h1m9 0h1m9 0h1m10 0h1m9 0h1m9 0h1M95 178.5h1m9 0h1m9 0h1m10 0h1m9 0h1m9 0h1m9 0h1m10 0h1m9 0h1m9 0h1m9 0h1m10 0h1m9 0h1m9 0h1m9 0h1m10 0h1m9 0h1m9 0h1m9 0h1m10 0h1m9 0h1m9 0h1m9 0h1m10 0h1m9 0h1m9 0h1m9 0h1m10 0h1m9 0h1m9 0h1m9 0h1m10 0h1m9 0h1m9 0h1m9 0h1m10 0h1m9 0h1m9 0h1m9 0h1m10 0h1m9 0h1m9 0h1m9 0h1m10 0h1m9 0h1m9 0h1m9 0h1m10 0h1m9 0h1m9 0h1m9 0h1m10 0h1m9 0h1m9 0h1m9 0h1m10 0h1m9 0h1m9 0h1m9 0h1m10 0h1m9 0h1m9 0h1m9 0h1m10 0h1m9 0h1m9 0h1m9 0h1m10 0h1m9 0h1m9 0h1m9 0h1m10 0h1m9 0h1m9 0h1m9 0h1m10 0h1m9 0h1m9 0h1m9 0h1m10 0h1m9 0h1m9 0h1m9 0h1m10 0h1m9 0h1m9 0h1m9 0h1m10 0h1m9 0h1m9 0h1m9 0h1m10 0h1m9 0h1m9 0h1m9 0h1m10 0h1m9 0h1m9 0h1m9 0h1m10 0h1m9 0h1m9 0h1M95 168.5h1m9 0h1m9 0h1m10 0h1m9 0h1m9 0h1m9 0h1m10 0h1m9 0h1m9 0h1m9 0h1m10 0h1m9 0h1m9 0h1m9 0h1m10 0h1m9 0h1m9 0h1m9 0h1m10 0h1m9 0h1m9 0h1m9 0h1m10 0h1m9 0h1m9 0h1m9 0h1m10 0h1m9 0h1m9 0h1m9 0h1m10 0h1m9 0h1m9 0h1m9 0h1m10 0h1m9 0h1m9 0h1m9 0h1m10 0h1m9 0h1m9 0h1m9 0h1m10 0h1m9 0h1m9 0h1m9 0h1m10 0h1m9 0h1m9 0h1m9 0h1m10 0h1m9 0h1m9 0h1m9 0h1m10 0h1m9 0h1m9 0h1m9 0h1m10 0h1m9 0h1m9 0h1m9 0h1m10 0h1m9 0h1m9 0h1m9 0h1m10 0h1m9 0h1m9 0h1m9 0h1m10 0h1m9 0h1m9 0h1m9 0h1m10 0h1m9 0h1m9 0h1m9 0h1m10 0h1m9 0h1m9 0h1m9 0h1m10 0h1m9 0h1m9 0h1m9 0h1m10 0h1m9 0h1m9 0h1m9 0h1m10 0h1m9 0h1m9 0h1m9 0h1m10 0h1m9 0h1m9 0h1m9 0h1m10 0h1m9 0h1m9 0h1M95 158.5h1m9 0h1m9 0h1m10 0h1m9 0h1m9 0h1m9 0h1m10 0h1m9 0h1m9 0h1m9 0h1m10 0h1m9 0h1m9 0h1m9 0h1m10 0h1m9 0h1m9 0h1m9 0h1m10 0h1m9 0h1m9 0h1m9 0h1m10 0h1m9 0h1m9 0h1m9 0h1m10 0h1m9 0h1m9 0h1m9 0h1m10 0h1m9 0h1m9 0h1m9 0h1m10 0h1m9 0h1m9 0h1m9 0h1m10 0h1m9 0h1m9 0h1m9 0h1m10 0h1m9 0h1m9 0h1m9 0h1m10 0h1m9 0h1m9 0h1m9 0h1m10 0h1m9 0h1m9 0h1m9 0h1m10 0h1m9 0h1m9 0h1m9 0h1m10 0h1m9 0h1m9 0h1m9 0h1m10 0h1m9 0h1m9 0h1m9 0h1m10 0h1m9 0h1m9 0h1m9 0h1m10 0h1m9 0h1m9 0h1m9 0h1m10 0h1m9 0h1m9 0h1m9 0h1m10 0h1m9 0h1m9 0h1m9 0h1m10 0h1m9 0h1m9 0h1m9 0h1m10 0h1m9 0h1m9 0h1m9 0h1m10 0h1m9 0h1m9 0h1m9 0h1m10 0h1m9 0h1m9 0h1m9 0h1m10 0h1m9 0h1m9 0h1" stroke="#4a4a4a" stroke-width="1" fill="none"/>
<path d="M833.5 155V732M95 557.5H1138" stroke="#7a5f1a" stroke-width="1.2" stroke-dasharray="3 1" fill="none"/>
<path d="M125.7 629.5H166.7M146.5 609V650" stroke="#d00000" stroke-width="1" fill="none"/>
<rect x="146.2" y="270.75" width="922.5" height="358.75" rx="20" fill="none" stroke="#ffffff" stroke-width="2.6"/>
<path d="M186.7 363H191M197.75 363H199.35M206.1 363H223.1M229.85 363H231.45M238.2 363H255.2M261.95 363H263.55M270.3 363H287.3M294.05 363H295.65M302.4 363H319.4M326.15 363H327.75M334.5 363H351.5M358.25 363H359.85M366.6 363H383.6M390.35 363H391.95M398.7 363H403M294.82 311.2V323.15M294.82 329.9V331.5M294.82 338.25V355.25M294.82 362V363.6M294.82 370.35V387.35M294.82 394.1V395.7M294.82 402.45V414.4" stroke="#e00000" stroke-width="1.7" fill="none"/>
<path d="M233.32 327.12H356.32A35.88 35.88 0 0 1 356.32 398.88H233.32A35.88 35.88 0 0 1 233.32 327.12Z" fill="none" stroke="#a8a8a8" stroke-width="1.7" stroke-dasharray="9.3 2.6 1.5 2.6"/>
<circle cx="233.32" cy="363" r="7" fill="none" stroke="#ffffff" stroke-width="2.6"/>
<circle cx="356.32" cy="363" r="7" fill="none" stroke="#ffffff" stroke-width="2.6"/>
<path d="M245.54 346.57Q244.8 337.6 253.8 337.6L335.6 337.6Q344.6 337.6 343.89 346.57L341.31 379.43Q340.6 388.4 331.6 388.4L258 388.4Q249 388.4 248.26 379.43Z" fill="none" stroke="#ffffff" stroke-width="2.6"/>
<path d="M415 363H429.6M436.35 363H437.95M444.7 363H461.7M468.45 363H470.05M476.8 363H493.8M500.55 363H502.15M508.9 363H523.5M469.07 311V323.45M469.07 330.2V331.8M469.07 338.55V355.55M469.07 362.3V363.9M469.07 370.65V387.65M469.07 394.4V396M469.07 402.75V415.2" stroke="#e00000" stroke-width="1.7" fill="none"/>
<circle cx="469.07" cy="363" r="38.5" fill="none" stroke="#ffffff" stroke-width="2.6"/>
<path d="M545.7 363H553.25M560 363H561.6M568.35 363H585.35M592.1 363H593.7M600.45 363H608M576.7 331.5V339.3M576.7 346.05V347.65M576.7 354.4V371.4M576.7 378.15V379.75M576.7 386.5V394.3" stroke="#e00000" stroke-width="1.7" fill="none"/>
<circle cx="576.7" cy="363" r="18.3" fill="none" stroke="#ffffff" stroke-width="2.6"/>
<path d="M176.8 527H187.45M194.2 527H195.8M202.55 527H219.55M226.3 527H227.9M234.65 527H251.65M258.4 527H260M266.75 527H283.75M290.5 527H292.1M298.85 527H315.85M322.6 527H324.2M330.95 527H347.95M354.7 527H356.3M363.05 527H380.05M386.8 527H388.4M395.15 527H412.15M418.9 527H420.5M427.25 527H444.25M451 527H452.6M459.35 527H476.35M483.1 527H484.7M491.45 527H508.45M515.2 527H516.8M523.55 527H540.55M547.3 527H548.9M555.65 527H566.3M371.7 454.9V471.25M371.7 478V479.6M371.7 486.35V503.35M371.7 510.1V511.7M371.7 518.45V535.45M371.7 542.2V543.8M371.7 550.55V567.55M371.7 574.3V575.9M371.7 582.65V599" stroke="#e00000" stroke-width="1.7" fill="none"/>
<path d="M250.9 472.6H492.8A54.4 54.4 0 0 1 492.8 581.4H250.9A54.4 54.4 0 0 1 250.9 472.6Z" fill="none" stroke="#a8a8a8" stroke-width="1.7" stroke-dasharray="9.3 2.6 1.5 2.6"/>
<circle cx="234" cy="527" r="15.8" fill="none" stroke="#ffffff" stroke-width="2.6"/>
<circle cx="509.2" cy="527" r="15.8" fill="none" stroke="#ffffff" stroke-width="2.6"/>
<path d="M288 494.3H455.6V544.3H439.2L425.5 559.3H317.6L304.5 544.3H288Z" fill="none" stroke="#ffffff" stroke-width="2.6" stroke-linejoin="miter"/>
<path d="M846 521.8H850.6M857.35 521.8H858.95M865.7 521.8H882.7M889.45 521.8H891.05M897.8 521.8H914.8M921.55 521.8H923.15M929.9 521.8H946.9M953.65 521.8H955.25M962 521.8H979M985.75 521.8H987.35M994.1 521.8H1011.1M1017.85 521.8H1019.45M1026.2 521.8H1030.8M937.9 445V446.5M937.9 453.25V454.85M937.9 461.6V478.6M937.9 485.35V486.95M937.9 493.7V510.7M937.9 517.45V519.05M937.9 525.8V542.8M937.9 549.55V551.15M937.9 557.9V574.9M937.9 581.65V583.25M937.9 590V591.5" stroke="#e00000" stroke-width="1.7" fill="none"/>
<rect x="858.5" y="465.4" width="159.2" height="112.5" rx="19" fill="none" stroke="#ffffff" stroke-width="2.6"/>
<path d="M692.8 332.25a6.9 6.9 0 1 0 13.8 0a6.9 6.9 0 1 0 -13.8 0M723.55 332.25a6.9 6.9 0 1 0 13.8 0a6.9 6.9 0 1 0 -13.8 0M754.3 332.25a6.9 6.9 0 1 0 13.8 0a6.9 6.9 0 1 0 -13.8 0M785.05 332.25a6.9 6.9 0 1 0 13.8 0a6.9 6.9 0 1 0 -13.8 0M815.8 332.25a6.9 6.9 0 1 0 13.8 0a6.9 6.9 0 1 0 -13.8 0M846.55 332.25a6.9 6.9 0 1 0 13.8 0a6.9 6.9 0 1 0 -13.8 0M877.3 332.25a6.9 6.9 0 1 0 13.8 0a6.9 6.9 0 1 0 -13.8 0M908.05 332.25a6.9 6.9 0 1 0 13.8 0a6.9 6.9 0 1 0 -13.8 0M938.8 332.25a6.9 6.9 0 1 0 13.8 0a6.9 6.9 0 1 0 -13.8 0M969.55 332.25a6.9 6.9 0 1 0 13.8 0a6.9 6.9 0 1 0 -13.8 0M1000.3 332.25a6.9 6.9 0 1 0 13.8 0a6.9 6.9 0 1 0 -13.8 0M708.18 352.75a6.9 6.9 0 1 0 13.8 0a6.9 6.9 0 1 0 -13.8 0M738.93 352.75a6.9 6.9 0 1 0 13.8 0a6.9 6.9 0 1 0 -13.8 0M769.68 352.75a6.9 6.9 0 1 0 13.8 0a6.9 6.9 0 1 0 -13.8 0M800.43 352.75a6.9 6.9 0 1 0 13.8 0a6.9 6.9 0 1 0 -13.8 0M831.18 352.75a6.9 6.9 0 1 0 13.8 0a6.9 6.9 0 1 0 -13.8 0M861.93 352.75a6.9 6.9 0 1 0 13.8 0a6.9 6.9 0 1 0 -13.8 0M892.68 352.75a6.9 6.9 0 1 0 13.8 0a6.9 6.9 0 1 0 -13.8 0M923.43 352.75a6.9 6.9 0 1 0 13.8 0a6.9 6.9 0 1 0 -13.8 0M954.18 352.75a6.9 6.9 0 1 0 13.8 0a6.9 6.9 0 1 0 -13.8 0M984.93 352.75a6.9 6.9 0 1 0 13.8 0a6.9 6.9 0 1 0 -13.8 0M662.05 373.25a6.9 6.9 0 1 0 13.8 0a6.9 6.9 0 1 0 -13.8 0M723.55 373.25a6.9 6.9 0 1 0 13.8 0a6.9 6.9 0 1 0 -13.8 0M754.3 373.25a6.9 6.9 0 1 0 13.8 0a6.9 6.9 0 1 0 -13.8 0M785.05 373.25a6.9 6.9 0 1 0 13.8 0a6.9 6.9 0 1 0 -13.8 0M815.8 373.25a6.9 6.9 0 1 0 13.8 0a6.9 6.9 0 1 0 -13.8 0M846.55 373.25a6.9 6.9 0 1 0 13.8 0a6.9 6.9 0 1 0 -13.8 0M877.3 373.25a6.9 6.9 0 1 0 13.8 0a6.9 6.9 0 1 0 -13.8 0M908.05 373.25a6.9 6.9 0 1 0 13.8 0a6.9 6.9 0 1 0 -13.8 0M938.8 373.25a6.9 6.9 0 1 0 13.8 0a6.9 6.9 0 1 0 -13.8 0M969.55 373.25a6.9 6.9 0 1 0 13.8 0a6.9 6.9 0 1 0 -13.8 0M1000.3 373.25a6.9 6.9 0 1 0 13.8 0a6.9 6.9 0 1 0 -13.8 0M677.43 393.75a6.9 6.9 0 1 0 13.8 0a6.9 6.9 0 1 0 -13.8 0M738.93 393.75a6.9 6.9 0 1 0 13.8 0a6.9 6.9 0 1 0 -13.8 0M769.68 393.75a6.9 6.9 0 1 0 13.8 0a6.9 6.9 0 1 0 -13.8 0M800.43 393.75a6.9 6.9 0 1 0 13.8 0a6.9 6.9 0 1 0 -13.8 0M831.18 393.75a6.9 6.9 0 1 0 13.8 0a6.9 6.9 0 1 0 -13.8 0M861.93 393.75a6.9 6.9 0 1 0 13.8 0a6.9 6.9 0 1 0 -13.8 0M892.68 393.75a6.9 6.9 0 1 0 13.8 0a6.9 6.9 0 1 0 -13.8 0M923.43 393.75a6.9 6.9 0 1 0 13.8 0a6.9 6.9 0 1 0 -13.8 0M954.18 393.75a6.9 6.9 0 1 0 13.8 0a6.9 6.9 0 1 0 -13.8 0M984.93 393.75a6.9 6.9 0 1 0 13.8 0a6.9 6.9 0 1 0 -13.8 0M662.05 414.25a6.9 6.9 0 1 0 13.8 0a6.9 6.9 0 1 0 -13.8 0M692.8 414.25a6.9 6.9 0 1 0 13.8 0a6.9 6.9 0 1 0 -13.8 0M754.3 414.25a6.9 6.9 0 1 0 13.8 0a6.9 6.9 0 1 0 -13.8 0M785.05 414.25a6.9 6.9 0 1 0 13.8 0a6.9 6.9 0 1 0 -13.8 0M815.8 414.25a6.9 6.9 0 1 0 13.8 0a6.9 6.9 0 1 0 -13.8 0M846.55 414.25a6.9 6.9 0 1 0 13.8 0a6.9 6.9 0 1 0 -13.8 0M877.3 414.25a6.9 6.9 0 1 0 13.8 0a6.9 6.9 0 1 0 -13.8 0M908.05 414.25a6.9 6.9 0 1 0 13.8 0a6.9 6.9 0 1 0 -13.8 0M938.8 414.25a6.9 6.9 0 1 0 13.8 0a6.9 6.9 0 1 0 -13.8 0M969.55 414.25a6.9 6.9 0 1 0 13.8 0a6.9 6.9 0 1 0 -13.8 0M1000.3 414.25a6.9 6.9 0 1 0 13.8 0a6.9 6.9 0 1 0 -13.8 0M677.43 434.75a6.9 6.9 0 1 0 13.8 0a6.9 6.9 0 1 0 -13.8 0M708.18 434.75a6.9 6.9 0 1 0 13.8 0a6.9 6.9 0 1 0 -13.8 0M769.68 434.75a6.9 6.9 0 1 0 13.8 0a6.9 6.9 0 1 0 -13.8 0M800.43 434.75a6.9 6.9 0 1 0 13.8 0a6.9 6.9 0 1 0 -13.8 0M831.18 434.75a6.9 6.9 0 1 0 13.8 0a6.9 6.9 0 1 0 -13.8 0M861.93 434.75a6.9 6.9 0 1 0 13.8 0a6.9 6.9 0 1 0 -13.8 0M892.68 434.75a6.9 6.9 0 1 0 13.8 0a6.9 6.9 0 1 0 -13.8 0M923.43 434.75a6.9 6.9 0 1 0 13.8 0a6.9 6.9 0 1 0 -13.8 0M954.18 434.75a6.9 6.9 0 1 0 13.8 0a6.9 6.9 0 1 0 -13.8 0M984.93 434.75a6.9 6.9 0 1 0 13.8 0a6.9 6.9 0 1 0 -13.8 0M662.05 455.25a6.9 6.9 0 1 0 13.8 0a6.9 6.9 0 1 0 -13.8 0M692.8 455.25a6.9 6.9 0 1 0 13.8 0a6.9 6.9 0 1 0 -13.8 0M723.55 455.25a6.9 6.9 0 1 0 13.8 0a6.9 6.9 0 1 0 -13.8 0M785.05 455.25a6.9 6.9 0 1 0 13.8 0a6.9 6.9 0 1 0 -13.8 0M815.8 455.25a6.9 6.9 0 1 0 13.8 0a6.9 6.9 0 1 0 -13.8 0M677.43 475.75a6.9 6.9 0 1 0 13.8 0a6.9 6.9 0 1 0 -13.8 0M708.18 475.75a6.9 6.9 0 1 0 13.8 0a6.9 6.9 0 1 0 -13.8 0M738.93 475.75a6.9 6.9 0 1 0 13.8 0a6.9 6.9 0 1 0 -13.8 0M800.43 475.75a6.9 6.9 0 1 0 13.8 0a6.9 6.9 0 1 0 -13.8 0M662.05 496.25a6.9 6.9 0 1 0 13.8 0a6.9 6.9 0 1 0 -13.8 0M692.8 496.25a6.9 6.9 0 1 0 13.8 0a6.9 6.9 0 1 0 -13.8 0M723.55 496.25a6.9 6.9 0 1 0 13.8 0a6.9 6.9 0 1 0 -13.8 0M754.3 496.25a6.9 6.9 0 1 0 13.8 0a6.9 6.9 0 1 0 -13.8 0M815.8 496.25a6.9 6.9 0 1 0 13.8 0a6.9 6.9 0 1 0 -13.8 0M677.43 516.75a6.9 6.9 0 1 0 13.8 0a6.9 6.9 0 1 0 -13.8 0M708.18 516.75a6.9 6.9 0 1 0 13.8 0a6.9 6.9 0 1 0 -13.8 0M738.93 516.75a6.9 6.9 0 1 0 13.8 0a6.9 6.9 0 1 0 -13.8 0M769.68 516.75a6.9 6.9 0 1 0 13.8 0a6.9 6.9 0 1 0 -13.8 0M662.05 537.25a6.9 6.9 0 1 0 13.8 0a6.9 6.9 0 1 0 -13.8 0M692.8 537.25a6.9 6.9 0 1 0 13.8 0a6.9 6.9 0 1 0 -13.8 0M723.55 537.25a6.9 6.9 0 1 0 13.8 0a6.9 6.9 0 1 0 -13.8 0M754.3 537.25a6.9 6.9 0 1 0 13.8 0a6.9 6.9 0 1 0 -13.8 0M785.05 537.25a6.9 6.9 0 1 0 13.8 0a6.9 6.9 0 1 0 -13.8 0M677.43 557.75a6.9 6.9 0 1 0 13.8 0a6.9 6.9 0 1 0 -13.8 0M708.18 557.75a6.9 6.9 0 1 0 13.8 0a6.9 6.9 0 1 0 -13.8 0M738.93 557.75a6.9 6.9 0 1 0 13.8 0a6.9 6.9 0 1 0 -13.8 0M769.68 557.75a6.9 6.9 0 1 0 13.8 0a6.9 6.9 0 1 0 -13.8 0M800.43 557.75a6.9 6.9 0 1 0 13.8 0a6.9 6.9 0 1 0 -13.8 0M662.05 578.25a6.9 6.9 0 1 0 13.8 0a6.9 6.9 0 1 0 -13.8 0M692.8 578.25a6.9 6.9 0 1 0 13.8 0a6.9 6.9 0 1 0 -13.8 0M723.55 578.25a6.9 6.9 0 1 0 13.8 0a6.9 6.9 0 1 0 -13.8 0M754.3 578.25a6.9 6.9 0 1 0 13.8 0a6.9 6.9 0 1 0 -13.8 0M785.05 578.25a6.9 6.9 0 1 0 13.8 0a6.9 6.9 0 1 0 -13.8 0M815.8 578.25a6.9 6.9 0 1 0 13.8 0a6.9 6.9 0 1 0 -13.8 0" fill="none" stroke="#ffffff" stroke-width="2.6"/>
<rect x="663.95" y="320.25" width="10" height="10" fill="#0f86b3" stroke="#3a6f86" stroke-width="0.6"/><rect x="656.95" y="327.25" width="10" height="10" fill="#0f86b3" stroke="#3a6f86" stroke-width="0.6"/><rect x="670.95" y="327.25" width="10" height="10" fill="#0f86b3" stroke="#3a6f86" stroke-width="0.6"/><rect x="663.95" y="334.25" width="10" height="10" fill="#0f86b3" stroke="#3a6f86" stroke-width="0.6"/><rect x="666.95" y="330.25" width="4" height="4" fill="#0a10c0"/><rect x="679.33" y="340.75" width="10" height="10" fill="#0f86b3" stroke="#3a6f86" stroke-width="0.6"/><rect x="672.33" y="347.75" width="10" height="10" fill="#0f86b3" stroke="#3a6f86" stroke-width="0.6"/><rect x="686.33" y="347.75" width="10" height="10" fill="#0f86b3" stroke="#3a6f86" stroke-width="0.6"/><rect x="679.33" y="354.75" width="10" height="10" fill="#0f86b3" stroke="#3a6f86" stroke-width="0.6"/><rect x="682.33" y="350.75" width="4" height="4" fill="#0a10c0"/><rect x="694.7" y="361.25" width="10" height="10" fill="#0f86b3" stroke="#3a6f86" stroke-width="0.6"/><rect x="687.7" y="368.25" width="10" height="10" fill="#0f86b3" stroke="#3a6f86" stroke-width="0.6"/><rect x="701.7" y="368.25" width="10" height="10" fill="#0f86b3" stroke="#3a6f86" stroke-width="0.6"/><rect x="694.7" y="375.25" width="10" height="10" fill="#0f86b3" stroke="#3a6f86" stroke-width="0.6"/><rect x="697.7" y="371.25" width="4" height="4" fill="#0a10c0"/><rect x="710.08" y="381.75" width="10" height="10" fill="#0f86b3" stroke="#3a6f86" stroke-width="0.6"/><rect x="703.08" y="388.75" width="10" height="10" fill="#0f86b3" stroke="#3a6f86" stroke-width="0.6"/><rect x="717.08" y="388.75" width="10" height="10" fill="#0f86b3" stroke="#3a6f86" stroke-width="0.6"/><rect x="710.08" y="395.75" width="10" height="10" fill="#0f86b3" stroke="#3a6f86" stroke-width="0.6"/><rect x="713.08" y="391.75" width="4" height="4" fill="#0a10c0"/><rect x="725.45" y="402.25" width="10" height="10" fill="#0f86b3" stroke="#3a6f86" stroke-width="0.6"/><rect x="718.45" y="409.25" width="10" height="10" fill="#0f86b3" stroke="#3a6f86" stroke-width="0.6"/><rect x="732.45" y="409.25" width="10" height="10" fill="#0f86b3" stroke="#3a6f86" stroke-width="0.6"/><rect x="725.45" y="416.25" width="10" height="10" fill="#0f86b3" stroke="#3a6f86" stroke-width="0.6"/><rect x="728.45" y="412.25" width="4" height="4" fill="#0a10c0"/><rect x="740.83" y="422.75" width="10" height="10" fill="#0f86b3" stroke="#3a6f86" stroke-width="0.6"/><rect x="733.83" y="429.75" width="10" height="10" fill="#0f86b3" stroke="#3a6f86" stroke-width="0.6"/><rect x="747.83" y="429.75" width="10" height="10" fill="#0f86b3" stroke="#3a6f86" stroke-width="0.6"/><rect x="740.83" y="436.75" width="10" height="10" fill="#0f86b3" stroke="#3a6f86" stroke-width="0.6"/><rect x="743.83" y="432.75" width="4" height="4" fill="#0a10c0"/><rect x="756.2" y="443.25" width="10" height="10" fill="#0f86b3" stroke="#3a6f86" stroke-width="0.6"/><rect x="749.2" y="450.25" width="10" height="10" fill="#0f86b3" stroke="#3a6f86" stroke-width="0.6"/><rect x="763.2" y="450.25" width="10" height="10" fill="#0f86b3" stroke="#3a6f86" stroke-width="0.6"/><rect x="756.2" y="457.25" width="10" height="10" fill="#0f86b3" stroke="#3a6f86" stroke-width="0.6"/><rect x="759.2" y="453.25" width="4" height="4" fill="#0a10c0"/><rect x="771.58" y="463.75" width="10" height="10" fill="#0f86b3" stroke="#3a6f86" stroke-width="0.6"/><rect x="764.58" y="470.75" width="10" height="10" fill="#0f86b3" stroke="#3a6f86" stroke-width="0.6"/><rect x="778.58" y="470.75" width="10" height="10" fill="#0f86b3" stroke="#3a6f86" stroke-width="0.6"/><rect x="771.58" y="477.75" width="10" height="10" fill="#0f86b3" stroke="#3a6f86" stroke-width="0.6"/><rect x="774.58" y="473.75" width="4" height="4" fill="#0a10c0"/><rect x="786.95" y="484.25" width="10" height="10" fill="#0f86b3" stroke="#3a6f86" stroke-width="0.6"/><rect x="779.95" y="491.25" width="10" height="10" fill="#0f86b3" stroke="#3a6f86" stroke-width="0.6"/><rect x="793.95" y="491.25" width="10" height="10" fill="#0f86b3" stroke="#3a6f86" stroke-width="0.6"/><rect x="786.95" y="498.25" width="10" height="10" fill="#0f86b3" stroke="#3a6f86" stroke-width="0.6"/><rect x="789.95" y="494.25" width="4" height="4" fill="#0a10c0"/><rect x="802.33" y="504.75" width="10" height="10" fill="#0f86b3" stroke="#3a6f86" stroke-width="0.6"/><rect x="795.33" y="511.75" width="10" height="10" fill="#0f86b3" stroke="#3a6f86" stroke-width="0.6"/><rect x="809.33" y="511.75" width="10" height="10" fill="#0f86b3" stroke="#3a6f86" stroke-width="0.6"/><rect x="802.33" y="518.75" width="10" height="10" fill="#0f86b3" stroke="#3a6f86" stroke-width="0.6"/><rect x="805.33" y="514.75" width="4" height="4" fill="#0a10c0"/><rect x="817.7" y="525.25" width="10" height="10" fill="#0f86b3" stroke="#3a6f86" stroke-width="0.6"/><rect x="810.7" y="532.25" width="10" height="10" fill="#0f86b3" stroke="#3a6f86" stroke-width="0.6"/><rect x="824.7" y="532.25" width="10" height="10" fill="#0f86b3" stroke="#3a6f86" stroke-width="0.6"/><rect x="817.7" y="539.25" width="10" height="10" fill="#0f86b3" stroke="#3a6f86" stroke-width="0.6"/><rect x="820.7" y="535.25" width="4" height="4" fill="#0a10c0"/>
<defs><radialGradient id="lp" cx="0.5" cy="0.5" r="0.5"><stop offset="0.72" stop-color="#50687a" stop-opacity="0"/><stop offset="0.8" stop-color="#50687a" stop-opacity="0.75"/><stop offset="0.9" stop-color="#7890a2" stop-opacity="0.9"/><stop offset="0.97" stop-color="#a8bccb" stop-opacity="0.8"/><stop offset="1" stop-color="#a8bccb" stop-opacity="0"/></radialGradient></defs>
<circle cx="833" cy="557" r="40" fill="url(#lp)"/>
<path d="M818 557H848M833 542V572" stroke="#c4c4c4" stroke-width="2.6" fill="none"/>
<circle cx="833" cy="557" r="1.6" fill="#a02020"/>
<circle cx="833" cy="557" r="4.5" fill="none" stroke="#d00000" stroke-width="0.8" stroke-dasharray="1.5 1"/>
</g>
</svg>
<div class="abs" style="left:1155px;top:108px;width:300px;height:690px;background:#ececec"></div>
<div class="t" style="left:1284px;top:113px;font-size:12px;color:#333">Lista de capas</div>
<svg class="abs" style="left:1156px;top:110px" width="34" height="16"><circle cx="8" cy="8" r="6.8" fill="#6e6e6e"/><path d="M5.3 5.3L10.7 10.7M10.7 5.3L5.3 10.7" stroke="#fff" stroke-width="1.6"/><circle cx="26" cy="8" r="6.8" fill="#6e6e6e"/><rect x="22.5" y="7" width="5" height="4" fill="none" stroke="#fff" stroke-width="1"/><path d="M24.5 7V5H29.5V9H27.5" fill="none" stroke="#fff" stroke-width="1"/></svg>
<div class="abs" style="left:1155px;top:130px;width:61px;height:26px;box-sizing:border-box;border:1px solid #b9b9b9;background:linear-gradient(#fbfbfb,#ececec)"></div>
<div class="abs" style="left:1215px;top:130px;width:61px;height:26px;box-sizing:border-box;border:1px solid #b9b9b9;background:linear-gradient(#fbfbfb,#ececec)"></div>
<div class="abs" style="left:1275px;top:130px;width:61px;height:26px;box-sizing:border-box;border:1px solid #b9b9b9;background:linear-gradient(#fbfbfb,#ececec)"></div>
<div class="abs" style="left:1335px;top:130px;width:61px;height:26px;box-sizing:border-box;border:1px solid #b9b9b9;background:linear-gradient(#fbfbfb,#ececec)"></div>
<div class="abs" style="left:1395px;top:130px;width:61px;height:26px;box-sizing:border-box;border:1px solid #b9b9b9;background:linear-gradient(#fbfbfb,#ececec)"></div>
<svg class="abs" style="left:1177px;top:137px" width="16" height="12" viewBox="0 0 16 12"><path d="M0.8 6.2C3 0.2 13 0.2 15.2 6.2C13 11.8 3 11.8 0.8 6.2Z" fill="#000"/><path d="M3 6.6C5 2.8 11 2.8 13 6.6C11 9.8 5 9.8 3 6.6Z" fill="#fff"/><path d="M4.6 5.2A3.6 3.6 0 0 1 11.4 5.2A3.4 2.6 0 0 1 4.6 5.2Z" fill="#000"/><circle cx="7" cy="4.6" r="0.7" fill="#fff"/></svg>
<svg class="abs" style="left:1237px;top:137px" width="16" height="12" viewBox="0 0 16 12"><path d="M0.8 6.2C3 0.2 13 0.2 15.2 6.2C13 11.8 3 11.8 0.8 6.2Z" fill="#aaa"/><path d="M3 6.6C5 2.8 11 2.8 13 6.6C11 9.8 5 9.8 3 6.6Z" fill="#fff"/><path d="M4.6 5.2A3.6 3.6 0 0 1 11.4 5.2A3.4 2.6 0 0 1 4.6 5.2Z" fill="#aaa"/><circle cx="7" cy="4.6" r="0.7" fill="#fff"/></svg>
<svg class="abs" style="left:1297px;top:135px" width="16" height="16"><path d="M8 2V14M2 8H14" stroke="#e00000" stroke-width="3.2"/></svg>
<svg class="abs" style="left:1357px;top:135px" width="16" height="16"><path d="M2 8H14" stroke="#e00000" stroke-width="3.2"/></svg>
<svg class="abs" style="left:1417px;top:135px" width="16" height="16" viewBox="0 0 16 16"><path d="M2 14L3 10.5L12 1.5L14.5 4L5.5 13Z" fill="#e8b64a" stroke="#8a6a20" stroke-width="0.6"/><path d="M11 2.5L13.5 5L14.8 3.7L12.3 1.2Z" fill="#d83a3a"/><path d="M2 14L3 10.5L5.5 13Z" fill="#333"/></svg>
<div class="abs" style="left:1155px;top:156px;width:299px;height:642px;background:#fff;border-left:1px solid #c8c8c8;box-sizing:border-box"></div>
<div class="abs" style="left:1161px;top:163px;width:16px;height:9px;box-sizing:border-box;border:1px solid #222;background:#000"></div>
<div class="t" style="left:1183px;top:160px;font-size:13px;color:#111">0</div>
<svg class="abs" style="left:1415px;top:161.5px" width="16" height="12" viewBox="0 0 16 12"><path d="M0.8 6.2C3 0.2 13 0.2 15.2 6.2C13 11.8 3 11.8 0.8 6.2Z" fill="#000"/><path d="M3 6.6C5 2.8 11 2.8 13 6.6C11 9.8 5 9.8 3 6.6Z" fill="#fff"/><path d="M4.6 5.2A3.6 3.6 0 0 1 11.4 5.2A3.4 2.6 0 0 1 4.6 5.2Z" fill="#000"/><circle cx="7" cy="4.6" r="0.7" fill="#fff"/></svg>
<svg class="abs" style="left:1438px;top:160px" width="14" height="16" viewBox="0 0 14 16"><path d="M3.5 7V4.5A3.5 3.5 0 0 1 10.5 4.5V7" fill="none" stroke="#c4c4c4" stroke-width="1.8"/><rect x="2" y="7" width="10" height="8" rx="1" fill="#c4c4c4"/></svg>
<div class="abs" style="left:1161px;top:183px;width:16px;height:9px;box-sizing:border-box;border:1px solid #222;background:#ff0000"></div>
<div class="t" style="left:1183px;top:180px;font-size:13px;color:#111">Centro</div>
<svg class="abs" style="left:1415px;top:181.5px" width="16" height="12" viewBox="0 0 16 12"><path d="M0.8 6.2C3 0.2 13 0.2 15.2 6.2C13 11.8 3 11.8 0.8 6.2Z" fill="#000"/><path d="M3 6.6C5 2.8 11 2.8 13 6.6C11 9.8 5 9.8 3 6.6Z" fill="#fff"/><path d="M4.6 5.2A3.6 3.6 0 0 1 11.4 5.2A3.4 2.6 0 0 1 4.6 5.2Z" fill="#000"/><circle cx="7" cy="4.6" r="0.7" fill="#fff"/></svg>
<svg class="abs" style="left:1438px;top:180px" width="14" height="16" viewBox="0 0 14 16"><path d="M3.5 7V4.5A3.5 3.5 0 0 1 10.5 4.5V7" fill="none" stroke="#c4c4c4" stroke-width="1.8"/><rect x="2" y="7" width="10" height="8" rx="1" fill="#c4c4c4"/></svg>
<div class="abs" style="left:1161px;top:203px;width:16px;height:9px;box-sizing:border-box;border:1px solid #222;background:#000"></div>
<div class="t" style="left:1183px;top:200px;font-size:13px;color:#111">Ventilación</div>
<svg class="abs" style="left:1415px;top:201.5px" width="16" height="12" viewBox="0 0 16 12"><path d="M0.8 6.2C3 0.2 13 0.2 15.2 6.2C13 11.8 3 11.8 0.8 6.2Z" fill="#000"/><path d="M3 6.6C5 2.8 11 2.8 13 6.6C11 9.8 5 9.8 3 6.6Z" fill="#fff"/><path d="M4.6 5.2A3.6 3.6 0 0 1 11.4 5.2A3.4 2.6 0 0 1 4.6 5.2Z" fill="#000"/><circle cx="7" cy="4.6" r="0.7" fill="#fff"/></svg>
<svg class="abs" style="left:1438px;top:200px" width="14" height="16" viewBox="0 0 14 16"><path d="M3.5 7V4.5A3.5 3.5 0 0 1 10.5 4.5V7" fill="none" stroke="#c4c4c4" stroke-width="1.8"/><rect x="2" y="7" width="10" height="8" rx="1" fill="#c4c4c4"/></svg>
<div class="abs" style="left:1161px;top:223px;width:16px;height:9px;box-sizing:border-box;border:1px solid #222;background:#a2a2a8"></div>
<div class="t" style="left:1183px;top:220px;font-size:13px;color:#111">Volver</div>
<svg class="abs" style="left:1415px;top:221.5px" width="16" height="12" viewBox="0 0 16 12"><path d="M0.8 6.2C3 0.2 13 0.2 15.2 6.2C13 11.8 3 11.8 0.8 6.2Z" fill="#000"/><path d="M3 6.6C5 2.8 11 2.8 13 6.6C11 9.8 5 9.8 3 6.6Z" fill="#fff"/><path d="M4.6 5.2A3.6 3.6 0 0 1 11.4 5.2A3.4 2.6 0 0 1 4.6 5.2Z" fill="#000"/><circle cx="7" cy="4.6" r="0.7" fill="#fff"/></svg>
<svg class="abs" style="left:1438px;top:220px" width="14" height="16" viewBox="0 0 14 16"><path d="M3.5 7V4.5A3.5 3.5 0 0 1 10.5 4.5V7" fill="none" stroke="#c4c4c4" stroke-width="1.8"/><rect x="2" y="7" width="10" height="8" rx="1" fill="#c4c4c4"/></svg>
<svg class="abs" style="left:1392px;top:219px" width="16" height="16" viewBox="0 0 16 16"><path d="M2 14L3 10.5L12 1.5L14.5 4L5.5 13Z" fill="#e8b64a" stroke="#8a6a20" stroke-width="0.6"/><path d="M11 2.5L13.5 5L14.8 3.7L12.3 1.2Z" fill="#d83a3a"/><path d="M2 14L3 10.5L5.5 13Z" fill="#333"/></svg>
<div class="abs" style="left:1455px;top:108px;width:45px;height:690px;background:linear-gradient(90deg,#ededed,#dadada 60%,#c4c4c4);border-left:1px solid #c4c4c4;box-sizing:border-box"></div>
<div class="griph" style="left:1462px;top:116px;width:28px"></div>
<div class="abs" style="left:1457px;top:120px;width:42px;height:43px;border-radius:7px;background:#b8b8b8"></div>
<div class="abs" style="left:1457px;top:417px;width:42px;height:43px;border-radius:7px;background:#b8b8b8"></div>
<div class="abs" style="left:1462px;top:261px;width:38px;height:1px;background:repeating-linear-gradient(90deg,#777 0 1px,transparent 1px 4px)"></div>
<div class="abs" style="left:1462px;top:409px;width:38px;height:1px;background:repeating-linear-gradient(90deg,#777 0 1px,transparent 1px 4px)"></div>
<svg class="abs" style="left:1463px;top:127px" width="28" height="28" viewBox="0 0 28 28"><rect x="0.5" y="0.5" width="27" height="27" fill="#fff" stroke="#111"/><rect x="0" y="0" width="28" height="4" fill="#000"/><rect x="1" y="0.8" width="3" height="2.6" fill="#fff"/><path d="M8 11L13 9V21L8 23Z" fill="#999" stroke="#333" stroke-width="0.6"/><path d="M10 10L19 7V19L10 22Z" fill="#eee" stroke="#333" stroke-width="0.6"/><path d="M13 18L17 11L17 18Z" fill="none" stroke="#e02020" stroke-width="0.8"/></svg>
<svg class="abs" style="left:1463px;top:174px" width="28" height="28" viewBox="0 0 28 28"><rect x="0.5" y="0.5" width="27" height="27" fill="#fff" stroke="#111"/><rect x="0" y="0" width="28" height="4" fill="#000"/><rect x="1" y="0.8" width="3" height="2.6" fill="#fff"/><rect x="7" y="10" width="10" height="8" fill="#f3e6b8" stroke="#555" stroke-width="0.7"/><circle cx="17" cy="17" r="4.5" fill="#f3e6b8" stroke="#555" stroke-width="0.7" opacity="0.9"/></svg>
<svg class="abs" style="left:1463px;top:220px" width="28" height="28" viewBox="0 0 28 28"><rect x="0.5" y="0.5" width="27" height="27" fill="#fff" stroke="#111"/><rect x="0" y="0" width="28" height="4" fill="#000"/><rect x="1" y="0.8" width="3" height="2.6" fill="#fff"/><rect x="6" y="10" width="16" height="12" rx="2" fill="#f4f4f4" stroke="#b8c8e0" stroke-width="0.8"/></svg>
<svg class="abs" style="left:1463px;top:276px" width="28" height="28" viewBox="0 0 28 28"><rect x="0.5" y="0.5" width="27" height="27" fill="#fff" stroke="#111"/><rect x="0" y="0" width="28" height="4" fill="#000"/><rect x="1" y="0.8" width="3" height="2.6" fill="#fff"/><rect x="4" y="8" width="4" height="3" fill="#000"/><rect x="4" y="14" width="4" height="3" fill="#000"/><rect x="4" y="20" width="4" height="3" fill="#000"/><rect x="10" y="8" width="14" height="3" fill="none" stroke="#333" stroke-width="0.6"/><rect x="10" y="14" width="14" height="3" fill="none" stroke="#333" stroke-width="0.6"/><rect x="10" y="20" width="14" height="3" fill="none" stroke="#333" stroke-width="0.6"/></svg>
<svg class="abs" style="left:1463px;top:322px" width="28" height="28" viewBox="0 0 28 28"><rect x="0.5" y="0.5" width="27" height="27" fill="#fff" stroke="#111"/><rect x="0" y="0" width="28" height="4" fill="#000"/><rect x="1" y="0.8" width="3" height="2.6" fill="#fff"/><path d="M7 9H21L15.5 15V21L13 22.5V15Z" fill="#aaa" stroke="#444" stroke-width="0.6"/><ellipse cx="14" cy="9.5" rx="7" ry="1.6" fill="#777"/></svg>
<svg class="abs" style="left:1463px;top:368px" width="28" height="28" viewBox="0 0 28 28"><rect x="0.5" y="0.5" width="27" height="27" fill="#fff" stroke="#111"/><rect x="0" y="0" width="28" height="4" fill="#000"/><rect x="1" y="0.8" width="3" height="2.6" fill="#fff"/><path d="M7 9L13 13V21L7 25Z" fill="#fff" stroke="#333" stroke-width="0.7"/><rect x="13" y="13" width="9" height="8" fill="#888"/><path d="M4 17H24" stroke="#e88" stroke-width="0.5" stroke-dasharray="2 1"/></svg>
<svg class="abs" style="left:1463px;top:424px" width="28" height="28" viewBox="0 0 28 28"><rect x="0.5" y="0.5" width="27" height="27" fill="#fff" stroke="#111"/><rect x="0" y="0" width="28" height="4" fill="#000"/><rect x="1" y="0.8" width="3" height="2.6" fill="#fff"/><path d="M3 8H18M3 11H17M3 14H18M3 17H17" stroke="#777" stroke-width="0.7"/><path d="M0 24H28" stroke="#111" stroke-width="0.7"/><path d="M13 26.5H26" stroke="#777" stroke-width="0.8"/></svg>
<svg class="abs" style="left:1463px;top:471px" width="28" height="28" viewBox="0 0 28 28"><rect x="0.5" y="0.5" width="27" height="27" fill="#fff" stroke="#111"/><rect x="0" y="0" width="28" height="4" fill="#000"/><rect x="1" y="0.8" width="3" height="2.6" fill="#fff"/><rect x="7" y="8" width="14" height="17" rx="1.2" fill="#c98a2a"/><rect x="9" y="10" width="10" height="13.5" fill="#f8f8f8"/><rect x="11" y="7" width="6" height="3" rx="1" fill="#999"/><path d="M10.5 13H17.5M10.5 15.5H17.5M10.5 18H17.5" stroke="#bbb" stroke-width="0.6"/></svg>
<div class="abs" style="left:72px;top:748px;width:1082px;height:2px;background:#c3c3c3"></div>
<div class="abs" style="left:72px;top:750px;width:1082px;height:20px;background:#fff"></div>
<div class="abs" style="left:72px;top:770px;width:1082px;height:1px;background:#c8c8c8"></div>
<div class="abs" style="left:72px;top:771px;width:1082px;height:27px;background:#ececec"></div>
<div class="t" style="left:77px;top:752px;font-size:13px;color:#0000e0"><i>Comando:</i> snapfree</div>
<div class="t" style="left:73px;top:779px;font-size:13px;color:#111">Primer punto:</div>
<div class="abs" style="left:158px;top:776px;width:969px;height:18px;background:#fff"></div>
<div class="abs" style="left:1127px;top:772px;width:26px;height:25px;box-sizing:border-box;border:1px solid #b5b5b5;background:linear-gradient(#f4f4f4,#e2e2e2)"></div>
<svg class="abs" style="left:1131px;top:777px" width="18" height="15"><rect x="1.5" y="1.5" width="15" height="12" fill="#fff" stroke="#222" stroke-width="1"/><rect x="1" y="1" width="16" height="3" fill="#111"/></svg>
<div id="status" class="abs"></div>
<div class="t" style="left:2px;top:808px;font-size:9px;letter-spacing:0.33px;color:#111">67,7.0732</div>
<div class="t" style="left:2px;top:828.4px;font-size:9px;letter-spacing:0.4px;color:#111">@0,0</div>
<div class="abs" style="left:254px;top:802px;width:1px;height:40px;background:#8a8a8a"></div>
<div class="abs" style="left:255px;top:802px;width:1px;height:40px;background:#f4f4f4"></div>
<div class="t" style="left:256px;top:808px;font-size:9px;letter-spacing:0.33px;color:#111">67.3723&lt;6.03°</div>
<div class="t" style="left:256px;top:828.4px;font-size:9px;letter-spacing:0.33px;color:#111">@0&lt;0.00°</div>
<div class="abs" style="left:506px;top:819px;width:6px;height:6px;border-radius:3px;background:#c8c8c8"></div>
<div class="abs" style="left:940.4px;top:819px;width:6px;height:6px;border-radius:3px;background:#c8c8c8"></div>
<div class="abs" style="left:1268px;top:819px;width:6px;height:6px;border-radius:3px;background:#c8c8c8"></div>
<div class="t" style="left:640.8px;top:818px;font-size:9px;letter-spacing:0.47px;color:#111">Primer punto</div>
<div class="t" style="left:754.1px;top:818px;font-size:9px;letter-spacing:0.4px;color:#111">Cancelar</div>
<svg class="abs" style="left:716px;top:805px" width="20" height="32" viewBox="0 0 20 32"><rect x="1.3" y="1.2" width="17.6" height="29.5" rx="8.8" fill="#fff" stroke="#333" stroke-width="0.9"/><path d="M1.3 15Q10 12.5 18.9 15" fill="none" stroke="#333" stroke-width="1.1"/><rect x="8.7" y="2.5" width="2.8" height="8.5" rx="1.4" fill="#fff" stroke="#333" stroke-width="0.8"/><path d="M10.1 11V13.8" stroke="#333" stroke-width="0.8"/></svg>
<div class="t" style="left:949.2px;top:812.2px;font-size:9px;letter-spacing:0.55px;color:#111">Las entidades seleccionadas:</div>
<div class="t" style="left:949.2px;top:823.6px;font-size:9px;letter-spacing:0.56px;color:#111">22 Círculos en capa "Ventilación".</div>
</body></html>
